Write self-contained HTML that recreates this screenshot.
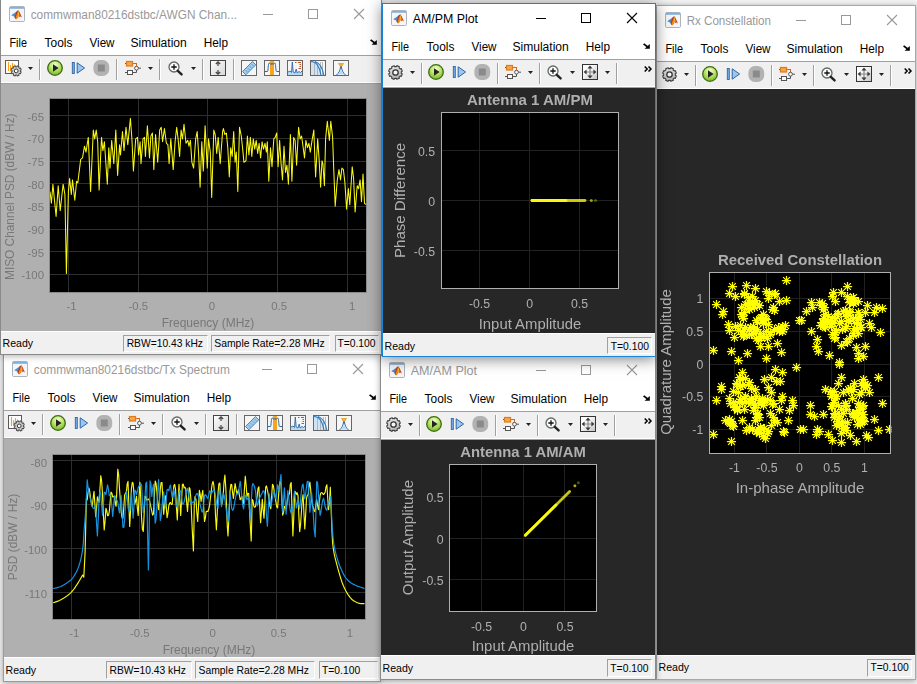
<!DOCTYPE html><html><head><meta charset="utf-8"><title>Scopes</title><style>
*{box-sizing:border-box;margin:0;padding:0}
html,body{width:917px;height:684px;overflow:hidden;background:#f3f3f3;font-family:"Liberation Sans",sans-serif;}
.win{position:absolute;background:#fff;overflow:hidden}
.abs{position:absolute}
.tb{position:absolute;left:0;right:0;background:#f0f0f0;border-top:1px solid #a0a0a0;}
.sep{position:absolute;width:1px;background:#a0a0a0;box-shadow:1px 0 0 #fff}
.st{position:absolute;left:0;right:0;background:#f0f0f0;border-top:1px solid #fff}
.box{position:absolute;border:1px solid;border-color:#a0a0a0 #fff #fff #a0a0a0;}
svg{position:absolute;overflow:visible}
svg text{font-family:"Liberation Sans",sans-serif;white-space:pre}
</style></head><body><div class="abs" style="left:0;top:0;width:917px;height:684px;overflow:hidden"><div class="win" style="left:3px;top:354px;width:378px;height:328px;border:1px solid #9c9c9c;box-shadow:0 1px 6px rgba(0,0,0,0.35)"><div class="abs" style="left:-1px;top:-1px;width:378px;height:328px"><svg style="left:9px;top:7px" width="16" height="16" viewBox="0 0 16 16">
<rect x="0.5" y="0.5" width="15" height="15" rx="1.2" fill="#f6f6f6" stroke="#a4aab2" stroke-width="0.9"/>
<rect x="1" y="1" width="14" height="1.8" fill="#7ab3e6"/>
<path d="M2.2 9.3L7.6 5.6L8.4 7L6.2 11.2L4.6 10.2Z" fill="#4a8fd2"/>
<path d="M9.4 4L7.6 5.6L5.4 11.6L7 13.4L8.4 12L9 8Z" fill="#b8321c"/>
<path d="M9.4 4.2L10.3 8L9.2 11.4L7.2 13.3L6.6 11.4L8.6 6.2Z" fill="#ef8a1e"/>
<path d="M9.4 4.4L9.9 8.6L9 8.8Z" fill="#f8d422"/>
<path d="M9.4 4L10.8 6.6L13 11.6L11.6 10.4L10.2 11.2L10.2 8Z" fill="#cc4420"/>
</svg><div class="abs" style="left:259px;top:15px;width:10px;height:1px;background:#999"></div><div class="abs" style="left:304px;top:10px;width:10px;height:10px;border:1px solid #999"></div><svg style="left:350px;top:10px" width="10" height="10"><path d="M0 0L10 10M10 0L0 10" stroke="#999" stroke-width="1.1" fill="none"/></svg><svg style="left:366px;top:40px" width="7" height="6" viewBox="0 0 7 6"><path d="M0.6 0.9L4.4 3.8" stroke="#000" stroke-width="1.7" fill="none"/><path d="M6.8 1V5.8H1.6Z" fill="#000"/></svg><div class="tb" style="top:56px;height:28px;border-bottom:1px solid #fff"></div><div class="abs" style="left:0;right:0;top:84px;height:1px;background:#a0a0a0"></div><svg style="left:5px;top:61px" width="17" height="17" viewBox="0 0 17 17">
<rect x="0.5" y="0.5" width="13" height="13" fill="#fcfcfc" stroke="#5a5a5a"/>
<path d="M3.5 2V11M5.5 5V11M7.5 3V9M9.5 4.5V8" stroke="#f5a01e" stroke-width="1.1"/>
<g transform="translate(11.2,10.9)"><path d="M5.10 -1.01L5.10 1.01L4.07 1.04L3.62 2.14L4.32 2.89L2.89 4.32L2.14 3.62L1.04 4.07L1.01 5.10L-1.01 5.10L-1.04 4.07L-2.14 3.62L-2.89 4.32L-4.32 2.89L-3.62 2.14L-4.07 1.04L-5.10 1.01L-5.10 -1.01L-4.07 -1.04L-3.62 -2.14L-4.32 -2.89L-2.89 -4.32L-2.14 -3.62L-1.04 -4.07L-1.01 -5.10L1.01 -5.10L1.04 -4.07L2.14 -3.62L2.89 -4.32L4.32 -2.89L3.62 -2.14L4.07 -1.04Z" fill="#c9c9c9" stroke="#4a4a4a" stroke-width="0.9" stroke-linejoin="round" transform="rotate(22.5)"/><circle r="1.9" fill="#fafafa" stroke="#3a3a3a" stroke-width="1"/></g>
</svg><svg style="left:28px;top:68px" width="5" height="3"><path d="M0 0H5L2.5 3Z" fill="#222"/></svg><div class="sep" style="left:39px;top:60px;height:21px"></div><svg style="left:47px;top:61px" width="64" height="16" viewBox="0 0 64 16">
<defs><radialGradient id="g5569" cx="0.5" cy="0.3" r="0.7"><stop offset="0" stop-color="#f6fce0"/><stop offset="0.5" stop-color="#b9e565"/><stop offset="1" stop-color="#74b428"/></radialGradient></defs>
<circle cx="8" cy="8" r="7.3" fill="url(#g5569)" stroke="#3f6b14" stroke-width="1.3"/>
<path d="M6 4.2L11.6 8L6 11.8Z" fill="#222"/>
<rect x="25.3" y="2.5" width="2" height="11" fill="#7db1e3" stroke="#2f66a8" stroke-width="0.9"/>
<path d="M30.2 2.8L37.6 8L30.2 13.2Z" fill="#9cc6ee" stroke="#2f66a8" stroke-width="1"/>
<rect x="46.4" y="0.1" width="15.8" height="15.8" rx="6.5" fill="#b2b2b2"/>
<rect x="50.8" y="4.5" width="7" height="7" fill="#8a8a8a"/>
</svg><div class="sep" style="left:116px;top:60px;height:21px"></div><svg style="left:125px;top:62px" width="16" height="15" viewBox="0 0 16 15">
<path d="M0 2.5H2M8 2.5H11.5V5.5M0 11.5H2.5M8 11.5H11.5V9M13 7.2H16" stroke="#555" stroke-width="1" fill="none"/>
<path d="M8 2.5H11.5V5.5" stroke="#d9651a" stroke-width="1" fill="none"/>
<rect x="1.5" y="0.5" width="6" height="4.5" fill="#f7a64a" stroke="#e07b1c" stroke-width="1.2"/>
<rect x="2.5" y="9.5" width="5" height="4" fill="#fafafa" stroke="#555"/>
<circle cx="11.5" cy="7.2" r="1.9" fill="#fafafa" stroke="#555"/>
</svg><svg style="left:148px;top:68px" width="5" height="3"><path d="M0 0H5L2.5 3Z" fill="#222"/></svg><div class="sep" style="left:159px;top:60px;height:21px"></div><svg style="left:168px;top:62px" width="16" height="15" viewBox="0 0 16 15">
<circle cx="6" cy="6" r="5" fill="#f6fafc" stroke="#666" stroke-width="1.3"/>
<path d="M3.3 6H8.7M6 3.3V8.7" stroke="#111" stroke-width="1.3"/>
<path d="M9.8 9.8L13.6 13.4" stroke="#222" stroke-width="2.4" stroke-linecap="round"/>
</svg><svg style="left:191px;top:68px" width="5" height="3"><path d="M0 0H5L2.5 3Z" fill="#222"/></svg><div class="sep" style="left:202px;top:60px;height:21px"></div><svg style="left:210px;top:61px" width="16" height="16" viewBox="0 0 16 16">
<defs><linearGradient id="as21061" x1="0" y1="0" x2="1" y2="1"><stop offset="0" stop-color="#fff"/><stop offset="1" stop-color="#d6d6d6"/></linearGradient></defs>
<rect x="0.5" y="0.5" width="15" height="15" fill="url(#as21061)" stroke="#444"/>
<path d="M8 2.2V6M5.8 4L8 1.8L10.2 4M8 10V13.8M5.8 12L8 14.2L10.2 12" stroke="#444" stroke-width="1.2" fill="none"/>
</svg><div class="sep" style="left:233px;top:60px;height:21px"></div><svg style="left:241px;top:61px" width="16" height="16" viewBox="0 0 16 16">
<rect x="0.5" y="0.5" width="15" height="15" fill="#f6f6f6" stroke="#666"/>
<path d="M1.5 11.5L11.5 1.5L14.8 4.8L4.8 14.8Z" fill="#9fcdee" stroke="#3d78b4" stroke-width="0.9"/>
<path d="M5 10.5l1 1M7 8.5l1 1M9 6.5l1 1M11 4.5l1 1" stroke="#2c5c94" stroke-width="0.8"/>
</svg><svg style="left:264px;top:61px" width="16" height="16" viewBox="0 0 16 16">
<rect x="0.5" y="0.5" width="15" height="15" fill="#f6f6f6" stroke="#666"/>
<rect x="6" y="1" width="4" height="14" fill="#f7a51c"/>
<path d="M1 11.5H3.5C4.3 11.5 4 3 5.2 3S6.2 4.5 7 4.5S7.6 3 8 3S8.4 4.5 9 4.5S9.8 3 10.8 3S11.7 11.5 12.5 11.5H15" stroke="#2f66a8" stroke-width="1" fill="none"/>
</svg><svg style="left:287px;top:61px" width="16" height="16" viewBox="0 0 16 16">
<rect x="0.5" y="0.5" width="15" height="15" fill="#f6f6f6" stroke="#666"/>
<path d="M1 15V12L3 11L4.5 12.5L5.3 2L6.2 12L8 13L9.2 9L10.2 13L12 11.5L13.5 12.5L15 11V15Z" fill="#b9d9f2"/>
<path d="M1 12L3 11L4.5 12.5L5.3 2L6.2 12L8 13L9.2 9L10.2 13L12 11.5L13.5 12.5L15 11" stroke="#2f66a8" stroke-width="0.9" fill="none"/>
<path d="M8 2.5H9.5M11 2.5H14M12.5 4.5H14M12.5 6.5H14M11.5 8.5H14" stroke="#c8501e" stroke-width="1"/>
</svg><svg style="left:310px;top:61px" width="16" height="16" viewBox="0 0 16 16">
<rect x="0.5" y="0.5" width="15" height="15" fill="#f6f6f6" stroke="#666"/>
<path d="M1 1.5C6 1.5 9.5 6 11 15H1Z" fill="#cfe3f5"/>
<path d="M4.5 2V15M7.5 3V15M10.5 2V15M12.5 2V15" stroke="#aaa" stroke-width="0.8"/>
<path d="M1 1.5C6 1.5 9.5 6 11 15M5 1.5C9.5 3 12.5 8 13.8 15" stroke="#2c7fc8" stroke-width="1.1" fill="none"/>
</svg><svg style="left:333px;top:61px" width="16" height="16" viewBox="0 0 16 16">
<rect x="0.5" y="0.5" width="15" height="15" fill="#f6f6f6" stroke="#666"/>
<path d="M5.5 3.5H10.5L8.6 6.5H7.4Z" fill="#f5b81e" stroke="#d18a10" stroke-width="0.6"/>
<path d="M3.5 15C6 13 7.4 10 7.6 6.5M12.5 15C10 13 8.6 10 8.4 6.5" stroke="#2f66a8" stroke-width="1" fill="none"/>
<path d="M5 14.5C6.8 13 7.7 11 8 8.5C8.3 11 9.2 13 11 14.5Z" fill="#b9d9f2"/>
</svg><div class="st" style="top:303px;height:24px"><div class="box" style="left:103px;top:3px;width:86px;height:18px"></div><div class="box" style="left:192px;top:3px;width:120px;height:18px"></div><div class="box" style="left:316px;top:3px;width:59px;height:18px"></div></div><svg style="left:-3px;top:-354px" width="917" height="684" viewBox="0 0 917 684"><rect x="0" y="439" width="382" height="218" fill="#b0b0b0"/><text x="33.7" y="373.8" font-size="12" fill="#999" textLength="196.2" lengthAdjust="spacingAndGlyphs">commwman80216dstbc/Tx Spectrum</text><text x="12.5" y="401.7" font-size="12" fill="#000" textLength="17.4" lengthAdjust="spacingAndGlyphs">File</text><text x="47.6" y="401.7" font-size="12" fill="#000" textLength="27.8" lengthAdjust="spacingAndGlyphs">Tools</text><text x="92.5" y="401.7" font-size="12" fill="#000" textLength="25" lengthAdjust="spacingAndGlyphs">View</text><text x="133.4" y="401.7" font-size="12" fill="#000" textLength="56.4" lengthAdjust="spacingAndGlyphs">Simulation</text><text x="206.7" y="401.7" font-size="12" fill="#000" textLength="24.3" lengthAdjust="spacingAndGlyphs">Help</text><text x="5.5" y="674.0" font-size="11" fill="#000" textLength="30.6" lengthAdjust="spacingAndGlyphs">Ready</text><text x="109.5" y="674.0" font-size="11" fill="#000" textLength="76.3" lengthAdjust="spacingAndGlyphs">RBW=10.43 kHz</text><text x="198.5" y="674.0" font-size="11" fill="#000" textLength="110.4" lengthAdjust="spacingAndGlyphs">Sample Rate=2.28 MHz</text><text x="322" y="674.0" font-size="11" fill="#000" textLength="38.2" lengthAdjust="spacingAndGlyphs">T=0.100</text></svg></div></div><div class="win" style="left:656px;top:5px;width:260px;height:675px;border:1px solid #a8a8a8;box-shadow:0 1px 6px rgba(0,0,0,0.35)"><div class="abs" style="left:-1px;top:-1px;width:260px;height:675px"><svg style="left:9px;top:7px" width="16" height="16" viewBox="0 0 16 16">
<rect x="0.5" y="0.5" width="15" height="15" rx="1.2" fill="#f6f6f6" stroke="#a4aab2" stroke-width="0.9"/>
<rect x="1" y="1" width="14" height="1.8" fill="#7ab3e6"/>
<path d="M2.2 9.3L7.6 5.6L8.4 7L6.2 11.2L4.6 10.2Z" fill="#4a8fd2"/>
<path d="M9.4 4L7.6 5.6L5.4 11.6L7 13.4L8.4 12L9 8Z" fill="#b8321c"/>
<path d="M9.4 4.2L10.3 8L9.2 11.4L7.2 13.3L6.6 11.4L8.6 6.2Z" fill="#ef8a1e"/>
<path d="M9.4 4.4L9.9 8.6L9 8.8Z" fill="#f8d422"/>
<path d="M9.4 4L10.8 6.6L13 11.6L11.6 10.4L10.2 11.2L10.2 8Z" fill="#cc4420"/>
</svg><div class="abs" style="left:140px;top:15px;width:10px;height:1px;background:#999"></div><div class="abs" style="left:185px;top:10px;width:10px;height:10px;border:1px solid #999"></div><svg style="left:231px;top:10px" width="10" height="10"><path d="M0 0L10 10M10 0L0 10" stroke="#999" stroke-width="1.1" fill="none"/></svg><svg style="left:247px;top:40px" width="7" height="6" viewBox="0 0 7 6"><path d="M0.6 0.9L4.4 3.8" stroke="#000" stroke-width="1.7" fill="none"/><path d="M6.8 1V5.8H1.6Z" fill="#000"/></svg><div class="tb" style="top:56px;height:28px;border-bottom:1px solid #fff"></div><div class="abs" style="left:0;right:0;top:84px;height:1px;background:#a0a0a0"></div><svg style="left:6px;top:61.5px" width="15" height="15" viewBox="-7.5 -7.5 15 15">
<defs><linearGradient id="gg60615" x1="0" y1="0" x2="1" y2="1"><stop offset="0" stop-color="#f2f2f2"/><stop offset="1" stop-color="#a8a8a8"/></linearGradient></defs>
<path d="M6.87 -1.37L6.87 1.37L5.71 1.47L5.08 3.00L5.82 3.89L3.89 5.82L3.00 5.08L1.47 5.71L1.37 6.87L-1.37 6.87L-1.47 5.71L-3.00 5.08L-3.89 5.82L-5.82 3.89L-5.08 3.00L-5.71 1.47L-6.87 1.37L-6.87 -1.37L-5.71 -1.47L-5.08 -3.00L-5.82 -3.89L-3.89 -5.82L-3.00 -5.08L-1.47 -5.71L-1.37 -6.87L1.37 -6.87L1.47 -5.71L3.00 -5.08L3.89 -5.82L5.82 -3.89L5.08 -3.00L5.71 -1.47Z" fill="url(#gg60615)" stroke="#3e3e3e" stroke-width="1.1" stroke-linejoin="round" transform="rotate(22.5)"/>
<circle r="2.7" fill="#f6f6f6" stroke="#333" stroke-width="1.3"/></svg><svg style="left:28px;top:68px" width="5" height="3"><path d="M0 0H5L2.5 3Z" fill="#222"/></svg><div class="sep" style="left:39px;top:60px;height:21px"></div><svg style="left:46px;top:61px" width="64" height="16" viewBox="0 0 64 16">
<defs><radialGradient id="g5469" cx="0.5" cy="0.3" r="0.7"><stop offset="0" stop-color="#f6fce0"/><stop offset="0.5" stop-color="#b9e565"/><stop offset="1" stop-color="#74b428"/></radialGradient></defs>
<circle cx="8" cy="8" r="7.3" fill="url(#g5469)" stroke="#3f6b14" stroke-width="1.3"/>
<path d="M6 4.2L11.6 8L6 11.8Z" fill="#222"/>
<rect x="25.3" y="2.5" width="2" height="11" fill="#7db1e3" stroke="#2f66a8" stroke-width="0.9"/>
<path d="M30.2 2.8L37.6 8L30.2 13.2Z" fill="#9cc6ee" stroke="#2f66a8" stroke-width="1"/>
<rect x="46.4" y="0.1" width="15.8" height="15.8" rx="6.5" fill="#b2b2b2"/>
<rect x="50.8" y="4.5" width="7" height="7" fill="#8a8a8a"/>
</svg><div class="sep" style="left:115px;top:60px;height:21px"></div><svg style="left:123px;top:62px" width="16" height="15" viewBox="0 0 16 15">
<path d="M0 2.5H2M8 2.5H11.5V5.5M0 11.5H2.5M8 11.5H11.5V9M13 7.2H16" stroke="#555" stroke-width="1" fill="none"/>
<path d="M8 2.5H11.5V5.5" stroke="#d9651a" stroke-width="1" fill="none"/>
<rect x="1.5" y="0.5" width="6" height="4.5" fill="#f7a64a" stroke="#e07b1c" stroke-width="1.2"/>
<rect x="2.5" y="9.5" width="5" height="4" fill="#fafafa" stroke="#555"/>
<circle cx="11.5" cy="7.2" r="1.9" fill="#fafafa" stroke="#555"/>
</svg><svg style="left:146px;top:68px" width="5" height="3"><path d="M0 0H5L2.5 3Z" fill="#222"/></svg><div class="sep" style="left:157px;top:60px;height:21px"></div><svg style="left:165px;top:62px" width="16" height="15" viewBox="0 0 16 15">
<circle cx="6" cy="6" r="5" fill="#f6fafc" stroke="#666" stroke-width="1.3"/>
<path d="M3.3 6H8.7M6 3.3V8.7" stroke="#111" stroke-width="1.3"/>
<path d="M9.8 9.8L13.6 13.4" stroke="#222" stroke-width="2.4" stroke-linecap="round"/>
</svg><svg style="left:188px;top:68px" width="5" height="3"><path d="M0 0H5L2.5 3Z" fill="#222"/></svg><svg style="left:199.5px;top:61px" width="16" height="16" viewBox="0 0 16 16">
<defs><linearGradient id="ft1995610" x1="0" y1="0" x2="1" y2="1"><stop offset="0.3" stop-color="#fdfdfd"/><stop offset="1" stop-color="#c4c4c4"/></linearGradient></defs>
<rect x="0.5" y="0.5" width="15" height="15" fill="url(#ft1995610)" stroke="#333"/>
<path d="M8 3.5V12.5M3.5 8H12.5" stroke="#8a8a8a" stroke-width="1.2"/>
<path d="M8 1.6L10.6 4.6H5.4ZM8 14.4L10.6 11.4H5.4ZM1.6 8L4.6 5.4V10.6ZM14.4 8L11.4 5.4V10.6Z" fill="#3a3a3a"/>
</svg><svg style="left:223px;top:68px" width="5" height="3"><path d="M0 0H5L2.5 3Z" fill="#222"/></svg><div class="sep" style="left:234px;top:60px;height:21px"></div><svg style="left:248px;top:63px" width="8" height="6" viewBox="0 0 8 6"><path d="M0.7 0.4L3.2 3L0.7 5.6M4.5 0.4L7 3L4.5 5.6" stroke="#000" stroke-width="1.5" fill="none"/></svg><div class="st" style="top:650px;height:24px"><div class="box" style="left:211px;top:3px;width:45px;height:18px"></div></div><svg style="left:-656px;top:-5px" width="917" height="684" viewBox="0 0 917 684"><rect x="656" y="89" width="262" height="566" fill="#272727"/><text x="686.7" y="24.8" font-size="12" fill="#999" textLength="84.3" lengthAdjust="spacingAndGlyphs">Rx Constellation</text><text x="665.5" y="52.7" font-size="12" fill="#000" textLength="17.4" lengthAdjust="spacingAndGlyphs">File</text><text x="700.6" y="52.7" font-size="12" fill="#000" textLength="27.8" lengthAdjust="spacingAndGlyphs">Tools</text><text x="745.5" y="52.7" font-size="12" fill="#000" textLength="25" lengthAdjust="spacingAndGlyphs">View</text><text x="786.4" y="52.7" font-size="12" fill="#000" textLength="56.4" lengthAdjust="spacingAndGlyphs">Simulation</text><text x="859.7" y="52.7" font-size="12" fill="#000" textLength="24.3" lengthAdjust="spacingAndGlyphs">Help</text><text x="658.5" y="671.4" font-size="11" fill="#000" textLength="30.6" lengthAdjust="spacingAndGlyphs">Ready</text><text x="870.5" y="671.4" font-size="11" fill="#000" textLength="38.2" lengthAdjust="spacingAndGlyphs">T=0.100</text></svg></div></div><div class="win" style="left:380px;top:355px;width:276px;height:325px;border:1px solid #8a8a8a;box-shadow:0 1px 6px rgba(0,0,0,0.35)"><div class="abs" style="left:-1px;top:-1px;width:276px;height:325px"><svg style="left:9px;top:7px" width="16" height="16" viewBox="0 0 16 16">
<rect x="0.5" y="0.5" width="15" height="15" rx="1.2" fill="#f6f6f6" stroke="#a4aab2" stroke-width="0.9"/>
<rect x="1" y="1" width="14" height="1.8" fill="#7ab3e6"/>
<path d="M2.2 9.3L7.6 5.6L8.4 7L6.2 11.2L4.6 10.2Z" fill="#4a8fd2"/>
<path d="M9.4 4L7.6 5.6L5.4 11.6L7 13.4L8.4 12L9 8Z" fill="#b8321c"/>
<path d="M9.4 4.2L10.3 8L9.2 11.4L7.2 13.3L6.6 11.4L8.6 6.2Z" fill="#ef8a1e"/>
<path d="M9.4 4.4L9.9 8.6L9 8.8Z" fill="#f8d422"/>
<path d="M9.4 4L10.8 6.6L13 11.6L11.6 10.4L10.2 11.2L10.2 8Z" fill="#cc4420"/>
</svg><div class="abs" style="left:156px;top:15px;width:10px;height:1px;background:#999"></div><div class="abs" style="left:201px;top:10px;width:10px;height:10px;border:1px solid #999"></div><svg style="left:247px;top:10px" width="10" height="10"><path d="M0 0L10 10M10 0L0 10" stroke="#999" stroke-width="1.1" fill="none"/></svg><svg style="left:263px;top:40px" width="7" height="6" viewBox="0 0 7 6"><path d="M0.6 0.9L4.4 3.8" stroke="#000" stroke-width="1.7" fill="none"/><path d="M6.8 1V5.8H1.6Z" fill="#000"/></svg><div class="tb" style="top:56px;height:28px;border-bottom:1px solid #fff"></div><div class="abs" style="left:0;right:0;top:84px;height:1px;background:#a0a0a0"></div><svg style="left:6px;top:61.5px" width="15" height="15" viewBox="-7.5 -7.5 15 15">
<defs><linearGradient id="gg60615" x1="0" y1="0" x2="1" y2="1"><stop offset="0" stop-color="#f2f2f2"/><stop offset="1" stop-color="#a8a8a8"/></linearGradient></defs>
<path d="M6.87 -1.37L6.87 1.37L5.71 1.47L5.08 3.00L5.82 3.89L3.89 5.82L3.00 5.08L1.47 5.71L1.37 6.87L-1.37 6.87L-1.47 5.71L-3.00 5.08L-3.89 5.82L-5.82 3.89L-5.08 3.00L-5.71 1.47L-6.87 1.37L-6.87 -1.37L-5.71 -1.47L-5.08 -3.00L-5.82 -3.89L-3.89 -5.82L-3.00 -5.08L-1.47 -5.71L-1.37 -6.87L1.37 -6.87L1.47 -5.71L3.00 -5.08L3.89 -5.82L5.82 -3.89L5.08 -3.00L5.71 -1.47Z" fill="url(#gg60615)" stroke="#3e3e3e" stroke-width="1.1" stroke-linejoin="round" transform="rotate(22.5)"/>
<circle r="2.7" fill="#f6f6f6" stroke="#333" stroke-width="1.3"/></svg><svg style="left:28px;top:68px" width="5" height="3"><path d="M0 0H5L2.5 3Z" fill="#222"/></svg><div class="sep" style="left:39px;top:60px;height:21px"></div><svg style="left:46px;top:61px" width="64" height="16" viewBox="0 0 64 16">
<defs><radialGradient id="g5469" cx="0.5" cy="0.3" r="0.7"><stop offset="0" stop-color="#f6fce0"/><stop offset="0.5" stop-color="#b9e565"/><stop offset="1" stop-color="#74b428"/></radialGradient></defs>
<circle cx="8" cy="8" r="7.3" fill="url(#g5469)" stroke="#3f6b14" stroke-width="1.3"/>
<path d="M6 4.2L11.6 8L6 11.8Z" fill="#222"/>
<rect x="25.3" y="2.5" width="2" height="11" fill="#7db1e3" stroke="#2f66a8" stroke-width="0.9"/>
<path d="M30.2 2.8L37.6 8L30.2 13.2Z" fill="#9cc6ee" stroke="#2f66a8" stroke-width="1"/>
<rect x="46.4" y="0.1" width="15.8" height="15.8" rx="6.5" fill="#b2b2b2"/>
<rect x="50.8" y="4.5" width="7" height="7" fill="#8a8a8a"/>
</svg><div class="sep" style="left:115px;top:60px;height:21px"></div><svg style="left:123px;top:62px" width="16" height="15" viewBox="0 0 16 15">
<path d="M0 2.5H2M8 2.5H11.5V5.5M0 11.5H2.5M8 11.5H11.5V9M13 7.2H16" stroke="#555" stroke-width="1" fill="none"/>
<path d="M8 2.5H11.5V5.5" stroke="#d9651a" stroke-width="1" fill="none"/>
<rect x="1.5" y="0.5" width="6" height="4.5" fill="#f7a64a" stroke="#e07b1c" stroke-width="1.2"/>
<rect x="2.5" y="9.5" width="5" height="4" fill="#fafafa" stroke="#555"/>
<circle cx="11.5" cy="7.2" r="1.9" fill="#fafafa" stroke="#555"/>
</svg><svg style="left:146px;top:68px" width="5" height="3"><path d="M0 0H5L2.5 3Z" fill="#222"/></svg><div class="sep" style="left:157px;top:60px;height:21px"></div><svg style="left:165px;top:62px" width="16" height="15" viewBox="0 0 16 15">
<circle cx="6" cy="6" r="5" fill="#f6fafc" stroke="#666" stroke-width="1.3"/>
<path d="M3.3 6H8.7M6 3.3V8.7" stroke="#111" stroke-width="1.3"/>
<path d="M9.8 9.8L13.6 13.4" stroke="#222" stroke-width="2.4" stroke-linecap="round"/>
</svg><svg style="left:188px;top:68px" width="5" height="3"><path d="M0 0H5L2.5 3Z" fill="#222"/></svg><svg style="left:199.5px;top:61px" width="16" height="16" viewBox="0 0 16 16">
<defs><linearGradient id="ft1995610" x1="0" y1="0" x2="1" y2="1"><stop offset="0.3" stop-color="#fdfdfd"/><stop offset="1" stop-color="#c4c4c4"/></linearGradient></defs>
<rect x="0.5" y="0.5" width="15" height="15" fill="url(#ft1995610)" stroke="#333"/>
<path d="M8 3.5V12.5M3.5 8H12.5" stroke="#8a8a8a" stroke-width="1.2"/>
<path d="M8 1.6L10.6 4.6H5.4ZM8 14.4L10.6 11.4H5.4ZM1.6 8L4.6 5.4V10.6ZM14.4 8L11.4 5.4V10.6Z" fill="#3a3a3a"/>
</svg><svg style="left:223px;top:68px" width="5" height="3"><path d="M0 0H5L2.5 3Z" fill="#222"/></svg><div class="sep" style="left:234px;top:60px;height:21px"></div><svg style="left:264px;top:63px" width="8" height="6" viewBox="0 0 8 6"><path d="M0.7 0.4L3.2 3L0.7 5.6M4.5 0.4L7 3L4.5 5.6" stroke="#000" stroke-width="1.5" fill="none"/></svg><div class="st" style="top:300px;height:24px"><div class="box" style="left:227px;top:3px;width:45px;height:18px"></div></div><svg style="left:-380px;top:-355px" width="917" height="684" viewBox="0 0 917 684"><rect x="380" y="440" width="276" height="215" fill="#272727"/><text x="410.7" y="374.8" font-size="12" fill="#999" textLength="66.4" lengthAdjust="spacingAndGlyphs">AM/AM Plot</text><text x="389.5" y="402.7" font-size="12" fill="#000" textLength="17.4" lengthAdjust="spacingAndGlyphs">File</text><text x="424.6" y="402.7" font-size="12" fill="#000" textLength="27.8" lengthAdjust="spacingAndGlyphs">Tools</text><text x="469.5" y="402.7" font-size="12" fill="#000" textLength="25" lengthAdjust="spacingAndGlyphs">View</text><text x="510.4" y="402.7" font-size="12" fill="#000" textLength="56.4" lengthAdjust="spacingAndGlyphs">Simulation</text><text x="583.7" y="402.7" font-size="12" fill="#000" textLength="24.3" lengthAdjust="spacingAndGlyphs">Help</text><text x="382.5" y="672.4" font-size="11" fill="#000" textLength="30.6" lengthAdjust="spacingAndGlyphs">Ready</text><text x="610.3" y="672.4" font-size="11" fill="#000" textLength="38.2" lengthAdjust="spacingAndGlyphs">T=0.100</text></svg></div></div><div class="win" style="left:0px;top:-1px;width:382px;height:356px;border:1px solid #8a8a8a;box-shadow:0 1px 7px rgba(0,0,0,0.32)"><div class="abs" style="left:-1px;top:-1px;width:382px;height:356px"><svg style="left:9px;top:7px" width="16" height="16" viewBox="0 0 16 16">
<rect x="0.5" y="0.5" width="15" height="15" rx="1.2" fill="#f6f6f6" stroke="#a4aab2" stroke-width="0.9"/>
<rect x="1" y="1" width="14" height="1.8" fill="#7ab3e6"/>
<path d="M2.2 9.3L7.6 5.6L8.4 7L6.2 11.2L4.6 10.2Z" fill="#4a8fd2"/>
<path d="M9.4 4L7.6 5.6L5.4 11.6L7 13.4L8.4 12L9 8Z" fill="#b8321c"/>
<path d="M9.4 4.2L10.3 8L9.2 11.4L7.2 13.3L6.6 11.4L8.6 6.2Z" fill="#ef8a1e"/>
<path d="M9.4 4.4L9.9 8.6L9 8.8Z" fill="#f8d422"/>
<path d="M9.4 4L10.8 6.6L13 11.6L11.6 10.4L10.2 11.2L10.2 8Z" fill="#cc4420"/>
</svg><div class="abs" style="left:263px;top:15px;width:10px;height:1px;background:#999"></div><div class="abs" style="left:308px;top:10px;width:10px;height:10px;border:1px solid #999"></div><svg style="left:354px;top:10px" width="10" height="10"><path d="M0 0L10 10M10 0L0 10" stroke="#999" stroke-width="1.1" fill="none"/></svg><svg style="left:370px;top:40px" width="7" height="6" viewBox="0 0 7 6"><path d="M0.6 0.9L4.4 3.8" stroke="#000" stroke-width="1.7" fill="none"/><path d="M6.8 1V5.8H1.6Z" fill="#000"/></svg><div class="tb" style="top:56px;height:28px;border-bottom:1px solid #fff"></div><div class="abs" style="left:0;right:0;top:84px;height:1px;background:#a0a0a0"></div><svg style="left:5px;top:61px" width="17" height="17" viewBox="0 0 17 17">
<rect x="0.5" y="0.5" width="13" height="13" fill="#fcfcfc" stroke="#5a5a5a"/>
<path d="M3.5 2V11M5.5 5V11M7.5 3V9M9.5 4.5V8" stroke="#f5a01e" stroke-width="1.1"/>
<g transform="translate(11.2,10.9)"><path d="M5.10 -1.01L5.10 1.01L4.07 1.04L3.62 2.14L4.32 2.89L2.89 4.32L2.14 3.62L1.04 4.07L1.01 5.10L-1.01 5.10L-1.04 4.07L-2.14 3.62L-2.89 4.32L-4.32 2.89L-3.62 2.14L-4.07 1.04L-5.10 1.01L-5.10 -1.01L-4.07 -1.04L-3.62 -2.14L-4.32 -2.89L-2.89 -4.32L-2.14 -3.62L-1.04 -4.07L-1.01 -5.10L1.01 -5.10L1.04 -4.07L2.14 -3.62L2.89 -4.32L4.32 -2.89L3.62 -2.14L4.07 -1.04Z" fill="#c9c9c9" stroke="#4a4a4a" stroke-width="0.9" stroke-linejoin="round" transform="rotate(22.5)"/><circle r="1.9" fill="#fafafa" stroke="#3a3a3a" stroke-width="1"/></g>
</svg><svg style="left:28px;top:68px" width="5" height="3"><path d="M0 0H5L2.5 3Z" fill="#222"/></svg><div class="sep" style="left:39px;top:60px;height:21px"></div><svg style="left:47px;top:61px" width="64" height="16" viewBox="0 0 64 16">
<defs><radialGradient id="g5569" cx="0.5" cy="0.3" r="0.7"><stop offset="0" stop-color="#f6fce0"/><stop offset="0.5" stop-color="#b9e565"/><stop offset="1" stop-color="#74b428"/></radialGradient></defs>
<circle cx="8" cy="8" r="7.3" fill="url(#g5569)" stroke="#3f6b14" stroke-width="1.3"/>
<path d="M6 4.2L11.6 8L6 11.8Z" fill="#222"/>
<rect x="25.3" y="2.5" width="2" height="11" fill="#7db1e3" stroke="#2f66a8" stroke-width="0.9"/>
<path d="M30.2 2.8L37.6 8L30.2 13.2Z" fill="#9cc6ee" stroke="#2f66a8" stroke-width="1"/>
<rect x="46.4" y="0.1" width="15.8" height="15.8" rx="6.5" fill="#b2b2b2"/>
<rect x="50.8" y="4.5" width="7" height="7" fill="#8a8a8a"/>
</svg><div class="sep" style="left:116px;top:60px;height:21px"></div><svg style="left:125px;top:62px" width="16" height="15" viewBox="0 0 16 15">
<path d="M0 2.5H2M8 2.5H11.5V5.5M0 11.5H2.5M8 11.5H11.5V9M13 7.2H16" stroke="#555" stroke-width="1" fill="none"/>
<path d="M8 2.5H11.5V5.5" stroke="#d9651a" stroke-width="1" fill="none"/>
<rect x="1.5" y="0.5" width="6" height="4.5" fill="#f7a64a" stroke="#e07b1c" stroke-width="1.2"/>
<rect x="2.5" y="9.5" width="5" height="4" fill="#fafafa" stroke="#555"/>
<circle cx="11.5" cy="7.2" r="1.9" fill="#fafafa" stroke="#555"/>
</svg><svg style="left:148px;top:68px" width="5" height="3"><path d="M0 0H5L2.5 3Z" fill="#222"/></svg><div class="sep" style="left:159px;top:60px;height:21px"></div><svg style="left:168px;top:62px" width="16" height="15" viewBox="0 0 16 15">
<circle cx="6" cy="6" r="5" fill="#f6fafc" stroke="#666" stroke-width="1.3"/>
<path d="M3.3 6H8.7M6 3.3V8.7" stroke="#111" stroke-width="1.3"/>
<path d="M9.8 9.8L13.6 13.4" stroke="#222" stroke-width="2.4" stroke-linecap="round"/>
</svg><svg style="left:191px;top:68px" width="5" height="3"><path d="M0 0H5L2.5 3Z" fill="#222"/></svg><div class="sep" style="left:202px;top:60px;height:21px"></div><svg style="left:210px;top:61px" width="16" height="16" viewBox="0 0 16 16">
<defs><linearGradient id="as21061" x1="0" y1="0" x2="1" y2="1"><stop offset="0" stop-color="#fff"/><stop offset="1" stop-color="#d6d6d6"/></linearGradient></defs>
<rect x="0.5" y="0.5" width="15" height="15" fill="url(#as21061)" stroke="#444"/>
<path d="M8 2.2V6M5.8 4L8 1.8L10.2 4M8 10V13.8M5.8 12L8 14.2L10.2 12" stroke="#444" stroke-width="1.2" fill="none"/>
</svg><div class="sep" style="left:233px;top:60px;height:21px"></div><svg style="left:241px;top:61px" width="16" height="16" viewBox="0 0 16 16">
<rect x="0.5" y="0.5" width="15" height="15" fill="#f6f6f6" stroke="#666"/>
<path d="M1.5 11.5L11.5 1.5L14.8 4.8L4.8 14.8Z" fill="#9fcdee" stroke="#3d78b4" stroke-width="0.9"/>
<path d="M5 10.5l1 1M7 8.5l1 1M9 6.5l1 1M11 4.5l1 1" stroke="#2c5c94" stroke-width="0.8"/>
</svg><svg style="left:264px;top:61px" width="16" height="16" viewBox="0 0 16 16">
<rect x="0.5" y="0.5" width="15" height="15" fill="#f6f6f6" stroke="#666"/>
<rect x="6" y="1" width="4" height="14" fill="#f7a51c"/>
<path d="M1 11.5H3.5C4.3 11.5 4 3 5.2 3S6.2 4.5 7 4.5S7.6 3 8 3S8.4 4.5 9 4.5S9.8 3 10.8 3S11.7 11.5 12.5 11.5H15" stroke="#2f66a8" stroke-width="1" fill="none"/>
</svg><svg style="left:287px;top:61px" width="16" height="16" viewBox="0 0 16 16">
<rect x="0.5" y="0.5" width="15" height="15" fill="#f6f6f6" stroke="#666"/>
<path d="M1 15V12L3 11L4.5 12.5L5.3 2L6.2 12L8 13L9.2 9L10.2 13L12 11.5L13.5 12.5L15 11V15Z" fill="#b9d9f2"/>
<path d="M1 12L3 11L4.5 12.5L5.3 2L6.2 12L8 13L9.2 9L10.2 13L12 11.5L13.5 12.5L15 11" stroke="#2f66a8" stroke-width="0.9" fill="none"/>
<path d="M8 2.5H9.5M11 2.5H14M12.5 4.5H14M12.5 6.5H14M11.5 8.5H14" stroke="#c8501e" stroke-width="1"/>
</svg><svg style="left:310px;top:61px" width="16" height="16" viewBox="0 0 16 16">
<rect x="0.5" y="0.5" width="15" height="15" fill="#f6f6f6" stroke="#666"/>
<path d="M1 1.5C6 1.5 9.5 6 11 15H1Z" fill="#cfe3f5"/>
<path d="M4.5 2V15M7.5 3V15M10.5 2V15M12.5 2V15" stroke="#aaa" stroke-width="0.8"/>
<path d="M1 1.5C6 1.5 9.5 6 11 15M5 1.5C9.5 3 12.5 8 13.8 15" stroke="#2c7fc8" stroke-width="1.1" fill="none"/>
</svg><svg style="left:333px;top:61px" width="16" height="16" viewBox="0 0 16 16">
<rect x="0.5" y="0.5" width="15" height="15" fill="#f6f6f6" stroke="#666"/>
<path d="M5.5 3.5H10.5L8.6 6.5H7.4Z" fill="#f5b81e" stroke="#d18a10" stroke-width="0.6"/>
<path d="M3.5 15C6 13 7.4 10 7.6 6.5M12.5 15C10 13 8.6 10 8.4 6.5" stroke="#2f66a8" stroke-width="1" fill="none"/>
<path d="M5 14.5C6.8 13 7.7 11 8 8.5C8.3 11 9.2 13 11 14.5Z" fill="#b9d9f2"/>
</svg><div class="st" style="top:332px;height:23px"><div class="box" style="left:123px;top:3px;width:85px;height:17px"></div><div class="box" style="left:211px;top:3px;width:119px;height:17px"></div><div class="box" style="left:335px;top:3px;width:44px;height:17px"></div></div><svg style="left:0px;top:1px" width="917" height="684" viewBox="0 0 917 684"><rect x="0" y="84" width="382" height="247" fill="#b0b0b0"/><text x="30.7" y="18.8" font-size="12" fill="#999" textLength="206.3" lengthAdjust="spacingAndGlyphs">commwman80216dstbc/AWGN Chan...</text><text x="9.5" y="46.7" font-size="12" fill="#000" textLength="17.4" lengthAdjust="spacingAndGlyphs">File</text><text x="44.6" y="46.7" font-size="12" fill="#000" textLength="27.8" lengthAdjust="spacingAndGlyphs">Tools</text><text x="89.5" y="46.7" font-size="12" fill="#000" textLength="25" lengthAdjust="spacingAndGlyphs">View</text><text x="130.4" y="46.7" font-size="12" fill="#000" textLength="56.4" lengthAdjust="spacingAndGlyphs">Simulation</text><text x="203.7" y="46.7" font-size="12" fill="#000" textLength="24.3" lengthAdjust="spacingAndGlyphs">Help</text><text x="2.5" y="346.9" font-size="11" fill="#000" textLength="30.6" lengthAdjust="spacingAndGlyphs">Ready</text><text x="126.7" y="346.9" font-size="11" fill="#000" textLength="76.3" lengthAdjust="spacingAndGlyphs">RBW=10.43 kHz</text><text x="214.3" y="346.9" font-size="11" fill="#000" textLength="110.4" lengthAdjust="spacingAndGlyphs">Sample Rate=2.28 MHz</text><text x="337.4" y="346.9" font-size="11" fill="#000" textLength="38.2" lengthAdjust="spacingAndGlyphs">T=0.100</text></svg></div></div><div class="win" style="left:382px;top:3px;width:274px;height:354px;border:1px solid #1883d7;box-shadow:0 2px 14px rgba(0,0,0,0.5)"><div class="abs" style="left:-1px;top:-1px;width:274px;height:354px"><svg style="left:9px;top:7px" width="16" height="16" viewBox="0 0 16 16">
<rect x="0.5" y="0.5" width="15" height="15" rx="1.2" fill="#f6f6f6" stroke="#a4aab2" stroke-width="0.9"/>
<rect x="1" y="1" width="14" height="1.8" fill="#7ab3e6"/>
<path d="M2.2 9.3L7.6 5.6L8.4 7L6.2 11.2L4.6 10.2Z" fill="#4a8fd2"/>
<path d="M9.4 4L7.6 5.6L5.4 11.6L7 13.4L8.4 12L9 8Z" fill="#b8321c"/>
<path d="M9.4 4.2L10.3 8L9.2 11.4L7.2 13.3L6.6 11.4L8.6 6.2Z" fill="#ef8a1e"/>
<path d="M9.4 4.4L9.9 8.6L9 8.8Z" fill="#f8d422"/>
<path d="M9.4 4L10.8 6.6L13 11.6L11.6 10.4L10.2 11.2L10.2 8Z" fill="#cc4420"/>
</svg><div class="abs" style="left:154px;top:15px;width:10px;height:1px;background:#000"></div><div class="abs" style="left:199px;top:10px;width:10px;height:10px;border:1px solid #000"></div><svg style="left:245px;top:10px" width="10" height="10"><path d="M0 0L10 10M10 0L0 10" stroke="#000" stroke-width="1.1" fill="none"/></svg><svg style="left:261px;top:40px" width="7" height="6" viewBox="0 0 7 6"><path d="M0.6 0.9L4.4 3.8" stroke="#000" stroke-width="1.7" fill="none"/><path d="M6.8 1V5.8H1.6Z" fill="#000"/></svg><div class="tb" style="top:56px;height:28px;border-bottom:1px solid #fff"></div><div class="abs" style="left:0;right:0;top:84px;height:1px;background:#a0a0a0"></div><svg style="left:6px;top:61.5px" width="15" height="15" viewBox="-7.5 -7.5 15 15">
<defs><linearGradient id="gg60615" x1="0" y1="0" x2="1" y2="1"><stop offset="0" stop-color="#f2f2f2"/><stop offset="1" stop-color="#a8a8a8"/></linearGradient></defs>
<path d="M6.87 -1.37L6.87 1.37L5.71 1.47L5.08 3.00L5.82 3.89L3.89 5.82L3.00 5.08L1.47 5.71L1.37 6.87L-1.37 6.87L-1.47 5.71L-3.00 5.08L-3.89 5.82L-5.82 3.89L-5.08 3.00L-5.71 1.47L-6.87 1.37L-6.87 -1.37L-5.71 -1.47L-5.08 -3.00L-5.82 -3.89L-3.89 -5.82L-3.00 -5.08L-1.47 -5.71L-1.37 -6.87L1.37 -6.87L1.47 -5.71L3.00 -5.08L3.89 -5.82L5.82 -3.89L5.08 -3.00L5.71 -1.47Z" fill="url(#gg60615)" stroke="#3e3e3e" stroke-width="1.1" stroke-linejoin="round" transform="rotate(22.5)"/>
<circle r="2.7" fill="#f6f6f6" stroke="#333" stroke-width="1.3"/></svg><svg style="left:28px;top:68px" width="5" height="3"><path d="M0 0H5L2.5 3Z" fill="#222"/></svg><div class="sep" style="left:39px;top:60px;height:21px"></div><svg style="left:46px;top:61px" width="64" height="16" viewBox="0 0 64 16">
<defs><radialGradient id="g5469" cx="0.5" cy="0.3" r="0.7"><stop offset="0" stop-color="#f6fce0"/><stop offset="0.5" stop-color="#b9e565"/><stop offset="1" stop-color="#74b428"/></radialGradient></defs>
<circle cx="8" cy="8" r="7.3" fill="url(#g5469)" stroke="#3f6b14" stroke-width="1.3"/>
<path d="M6 4.2L11.6 8L6 11.8Z" fill="#222"/>
<rect x="25.3" y="2.5" width="2" height="11" fill="#7db1e3" stroke="#2f66a8" stroke-width="0.9"/>
<path d="M30.2 2.8L37.6 8L30.2 13.2Z" fill="#9cc6ee" stroke="#2f66a8" stroke-width="1"/>
<rect x="46.4" y="0.1" width="15.8" height="15.8" rx="6.5" fill="#b2b2b2"/>
<rect x="50.8" y="4.5" width="7" height="7" fill="#8a8a8a"/>
</svg><div class="sep" style="left:115px;top:60px;height:21px"></div><svg style="left:123px;top:62px" width="16" height="15" viewBox="0 0 16 15">
<path d="M0 2.5H2M8 2.5H11.5V5.5M0 11.5H2.5M8 11.5H11.5V9M13 7.2H16" stroke="#555" stroke-width="1" fill="none"/>
<path d="M8 2.5H11.5V5.5" stroke="#d9651a" stroke-width="1" fill="none"/>
<rect x="1.5" y="0.5" width="6" height="4.5" fill="#f7a64a" stroke="#e07b1c" stroke-width="1.2"/>
<rect x="2.5" y="9.5" width="5" height="4" fill="#fafafa" stroke="#555"/>
<circle cx="11.5" cy="7.2" r="1.9" fill="#fafafa" stroke="#555"/>
</svg><svg style="left:146px;top:68px" width="5" height="3"><path d="M0 0H5L2.5 3Z" fill="#222"/></svg><div class="sep" style="left:157px;top:60px;height:21px"></div><svg style="left:165px;top:62px" width="16" height="15" viewBox="0 0 16 15">
<circle cx="6" cy="6" r="5" fill="#f6fafc" stroke="#666" stroke-width="1.3"/>
<path d="M3.3 6H8.7M6 3.3V8.7" stroke="#111" stroke-width="1.3"/>
<path d="M9.8 9.8L13.6 13.4" stroke="#222" stroke-width="2.4" stroke-linecap="round"/>
</svg><svg style="left:188px;top:68px" width="5" height="3"><path d="M0 0H5L2.5 3Z" fill="#222"/></svg><svg style="left:199.5px;top:61px" width="16" height="16" viewBox="0 0 16 16">
<defs><linearGradient id="ft1995610" x1="0" y1="0" x2="1" y2="1"><stop offset="0.3" stop-color="#fdfdfd"/><stop offset="1" stop-color="#c4c4c4"/></linearGradient></defs>
<rect x="0.5" y="0.5" width="15" height="15" fill="url(#ft1995610)" stroke="#333"/>
<path d="M8 3.5V12.5M3.5 8H12.5" stroke="#8a8a8a" stroke-width="1.2"/>
<path d="M8 1.6L10.6 4.6H5.4ZM8 14.4L10.6 11.4H5.4ZM1.6 8L4.6 5.4V10.6ZM14.4 8L11.4 5.4V10.6Z" fill="#3a3a3a"/>
</svg><svg style="left:223px;top:68px" width="5" height="3"><path d="M0 0H5L2.5 3Z" fill="#222"/></svg><div class="sep" style="left:234px;top:60px;height:21px"></div><svg style="left:262px;top:63px" width="8" height="6" viewBox="0 0 8 6"><path d="M0.7 0.4L3.2 3L0.7 5.6M4.5 0.4L7 3L4.5 5.6" stroke="#000" stroke-width="1.5" fill="none"/></svg><div class="st" style="top:330px;height:23px"><div class="box" style="left:225px;top:3px;width:45px;height:17px"></div></div><svg style="left:-382px;top:-3px" width="917" height="684" viewBox="0 0 917 684"><rect x="382" y="88" width="275" height="245" fill="#272727"/><text x="412.7" y="22.8" font-size="12" fill="#000" textLength="65.3" lengthAdjust="spacingAndGlyphs">AM/PM Plot</text><text x="391.5" y="50.7" font-size="12" fill="#000" textLength="17.4" lengthAdjust="spacingAndGlyphs">File</text><text x="426.6" y="50.7" font-size="12" fill="#000" textLength="27.8" lengthAdjust="spacingAndGlyphs">Tools</text><text x="471.5" y="50.7" font-size="12" fill="#000" textLength="25" lengthAdjust="spacingAndGlyphs">View</text><text x="512.4" y="50.7" font-size="12" fill="#000" textLength="56.4" lengthAdjust="spacingAndGlyphs">Simulation</text><text x="585.7" y="50.7" font-size="12" fill="#000" textLength="24.3" lengthAdjust="spacingAndGlyphs">Help</text><text x="384.5" y="349.7" font-size="11" fill="#000" textLength="30.6" lengthAdjust="spacingAndGlyphs">Ready</text><text x="610.7" y="349.7" font-size="11" fill="#000" textLength="38.2" lengthAdjust="spacingAndGlyphs">T=0.100</text></svg></div></div><svg style="left:0;top:0;will-change:transform" width="917" height="684" viewBox="0 0 917 684"><rect x="50" y="99" width="316" height="193" fill="#000"/><rect x="68" y="99" width="1" height="193" fill="#2e2e2e"/><rect x="138" y="99" width="1" height="193" fill="#2e2e2e"/><rect x="207" y="99" width="1" height="193" fill="#2e2e2e"/><rect x="277" y="99" width="1" height="193" fill="#2e2e2e"/><rect x="347" y="99" width="1" height="193" fill="#2e2e2e"/><rect x="50" y="115" width="316" height="1" fill="#2e2e2e"/><rect x="50" y="138" width="316" height="1" fill="#2e2e2e"/><rect x="50" y="161" width="316" height="1" fill="#2e2e2e"/><rect x="50" y="183" width="316" height="1" fill="#2e2e2e"/><rect x="50" y="206" width="316" height="1" fill="#2e2e2e"/><rect x="50" y="229" width="316" height="1" fill="#2e2e2e"/><rect x="50" y="251" width="316" height="1" fill="#2e2e2e"/><rect x="50" y="274" width="316" height="1" fill="#2e2e2e"/><clipPath id="c1"><rect x="50" y="99" width="317.5" height="193"/></clipPath><g clip-path="url(#c1)"><path d="M50.0 191.6L51.4 203.3L52.9 184.2L56.1 216.4L58.2 185.7L60.2 210.6L63.1 184.2L64.9 194.5L66.4 273.5L68.4 191.6L69.6 178.4L71.3 194.5L72.5 179.9L74.8 200.3L76.6 181.3L77.8 182.8L80.7 159.4L82.5 157.9L84.5 146.2L86.0 152.1L88.3 137.4L90.6 191.6L93.3 130.1L94.7 138.9L96.2 130.1L97.7 141.8L99.1 190.1L101.5 137.4L102.9 150.6L104.4 141.8L107.3 184.2L108.8 147.7L110.0 168.1L111.7 140.4L113.8 163.8L115.8 130.1L117.6 175.5L119.6 144.7L120.5 155.0L122.5 131.6L124.0 150.6L126.0 127.2L127.8 144.7L130.4 118.4L131.9 138.9L133.4 171.1L135.7 138.9L137.5 137.4L138.6 155.0L140.1 141.8L141.0 163.8L143.0 138.9L144.5 137.4L145.4 156.4L147.4 125.7L149.5 157.9L150.9 136.0L152.4 133.0L153.8 169.6L155.6 134.5L157.7 162.3L159.7 130.1L161.2 127.2L162.6 141.8L164.4 128.6L166.4 143.3L167.9 144.7L169.1 163.8L170.8 138.9L173.2 169.6L175.2 140.4L176.7 127.2L178.1 138.9L179.6 156.4L181.1 130.1L182.5 138.9L184.0 124.3L186.0 143.3L187.8 140.4L189.0 146.2L190.4 140.4L191.9 162.3L193.6 168.1L195.7 138.9L197.2 131.6L198.6 153.5L200.1 187.2L201.8 141.8L203.3 171.1L205.1 125.7L207.3 168.1L208.5 138.9L210.3 152.1L211.7 197.4L213.8 130.1L215.2 134.5L216.7 153.5L218.2 137.4L220.2 163.8L222.6 131.6L223.4 128.6L224.9 134.5L226.4 133.0L227.8 147.7L229.3 176.9L230.7 147.7L232.2 156.4L233.7 131.6L235.1 162.3L236.3 152.1L237.8 191.6L239.5 127.2L241.3 136.0L243.0 152.1L243.9 162.3L246.0 160.8L247.4 136.0L248.9 155.0L250.4 137.4L251.8 156.4L253.3 138.9L254.7 149.1L256.2 140.4L257.7 153.5L259.1 143.3L260.6 157.9L262.1 141.8L263.5 149.1L265.0 143.3L266.4 152.1L267.3 141.8L268.8 181.3L270.5 147.7L272.0 166.7L273.8 138.9L275.2 137.4L276.7 133.0L278.1 166.7L279.6 140.4L281.1 163.8L282.5 179.9L284.0 146.2L285.5 172.5L286.9 165.2L288.4 184.2L290.4 134.5L291.9 181.3L293.7 137.4L295.1 140.4L296.6 165.2L298.6 127.2L300.1 138.9L301.6 136.0L303.0 146.2L304.5 157.9L305.9 140.4L307.4 147.7L308.9 143.3L310.3 152.1L311.8 141.8L313.8 130.1L315.6 176.9L317.7 138.9L319.1 159.4L320.6 187.2L322.0 160.8L322.9 163.8L324.4 185.7L325.6 138.9L327.3 121.3L329.4 140.4L330.8 121.3L332.6 137.4L333.7 168.1L335.2 206.2L337.3 179.9L339.0 169.6L340.5 179.9L341.9 168.1L343.4 169.6L344.9 182.8L346.6 209.1L348.4 188.6L349.8 204.7L352.2 166.7L353.6 178.4L355.1 212.0L357.2 185.7L358.6 188.6L360.1 179.9L361.5 201.8L363.0 174.0L364.5 203.3L366.2 204.7" fill="none" stroke="#f8f810" stroke-width="1.05" stroke-linejoin="round" /><path d="M366.7 218V233" stroke="#f8f810" stroke-width="1"/></g><rect x="49.5" y="98.5" width="317" height="194" fill="none" stroke="#8a8a8a" stroke-width="1"/><text x="71.6" y="309.7" font-size="11.4" fill="#787878" text-anchor="middle">-1</text><text x="138.4" y="309.7" font-size="11.4" fill="#787878" text-anchor="middle">-0.5</text><text x="212.0" y="309.7" font-size="11.4" fill="#787878" text-anchor="middle">0</text><text x="279.2" y="309.7" font-size="11.4" fill="#787878" text-anchor="middle">0.5</text><text x="352.1" y="309.7" font-size="11.4" fill="#787878" text-anchor="middle">1</text><text x="44" y="120.6" font-size="11.4" fill="#787878" text-anchor="end">-65</text><text x="44" y="143.3" font-size="11.4" fill="#787878" text-anchor="end">-70</text><text x="44" y="165.9" font-size="11.4" fill="#787878" text-anchor="end">-75</text><text x="44" y="188.6" font-size="11.4" fill="#787878" text-anchor="end">-80</text><text x="44" y="211.3" font-size="11.4" fill="#787878" text-anchor="end">-85</text><text x="44" y="234.0" font-size="11.4" fill="#787878" text-anchor="end">-90</text><text x="44" y="256.6" font-size="11.4" fill="#787878" text-anchor="end">-95</text><text x="44" y="279.3" font-size="11.4" fill="#787878" text-anchor="end">-100</text><text x="208.0" y="327.3" font-size="12" fill="#787878" text-anchor="middle">Frequency (MHz)</text><text transform="translate(13.9,196.7) rotate(-90)" font-size="12" fill="#787878" text-anchor="middle" textLength="166.5" lengthAdjust="spacingAndGlyphs">MISO Channel PSD (dBW / Hz)</text><rect x="53" y="455" width="312" height="164" fill="#000"/><rect x="71" y="455" width="1" height="164" fill="#2e2e2e"/><rect x="139" y="455" width="1" height="164" fill="#2e2e2e"/><rect x="208" y="455" width="1" height="164" fill="#2e2e2e"/><rect x="276" y="455" width="1" height="164" fill="#2e2e2e"/><rect x="345" y="455" width="1" height="164" fill="#2e2e2e"/><rect x="53" y="460" width="312" height="1" fill="#2e2e2e"/><rect x="53" y="504" width="312" height="1" fill="#2e2e2e"/><rect x="53" y="548" width="312" height="1" fill="#2e2e2e"/><rect x="53" y="592" width="312" height="1" fill="#2e2e2e"/><clipPath id="c2"><rect x="53" y="455" width="313.5" height="164"/></clipPath><g clip-path="url(#c2)"><path d="M53.1 602.8L53.9 602.5L55.1 602.1L56.5 601.6L57.9 601.1L59.4 600.5L60.8 599.8L62.1 599.1L63.5 598.3L64.8 597.4L66.1 596.5L67.4 595.6L68.5 594.7L69.5 593.9L70.4 593.1L71.2 592.3L72.0 591.4L72.8 590.5L73.6 589.5L74.5 588.4L75.3 587.1L76.2 585.7L77.1 584.4L77.9 583.1L78.7 581.8L79.5 580.5L80.2 579.2L81.0 577.9L81.6 576.7L82.2 575.7L82.6 575.0L83.8 577.2L85.1 552.4L86.4 498.6L87.2 500.0L87.9 493.4L88.9 488.0L89.8 491.9L90.6 498.3L91.5 504.0L92.3 506.4L93.2 497.8L94.0 491.3L94.9 504.2L95.7 516.6L96.6 508.0L97.4 496.9L98.3 500.0L99.1 502.2L100.0 488.1L100.8 475.7L101.7 481.5L102.5 494.9L103.4 514.9L104.2 529.9L105.1 520.8L105.9 508.3L106.8 510.9L107.6 515.8L108.5 515.3L109.3 511.5L110.2 501.2L111.0 492.1L111.9 493.3L112.7 496.9L113.6 496.5L114.4 496.7L115.3 503.7L116.1 506.2L117.0 487.0L117.8 469.2L118.7 475.2L119.5 488.7L120.4 501.1L121.2 511.8L122.1 517.9L122.9 518.2L123.8 507.3L124.6 495.2L125.5 493.2L126.3 492.5L127.2 483.9L128.0 481.3L128.9 505.5L129.7 526.4L130.6 510.8L131.4 488.8L132.3 482.3L133.1 483.2L134.0 493.9L134.8 504.2L135.7 500.4L136.5 496.4L137.3 507.5L138.2 515.5L139.0 497.8L139.9 482.2L140.7 497.4L141.6 518.4L142.4 529.3L143.3 531.4L144.1 514.6L145.0 496.6L145.8 496.3L146.7 500.1L147.5 499.5L148.4 499.0L149.2 500.3L150.1 502.9L150.9 507.1L151.8 511.1L152.6 515.1L153.5 513.9L154.3 497.0L155.2 481.0L156.0 483.1L156.9 491.6L157.7 502.6L158.6 509.7L159.4 501.0L160.3 489.2L161.1 482.6L162.0 482.6L162.8 499.2L163.7 514.3L164.5 505.7L165.4 495.9L166.2 506.4L167.1 517.7L167.9 513.3L168.8 505.7L169.6 503.3L170.5 502.5L171.3 504.4L172.2 504.2L173.0 494.6L173.9 485.3L174.7 484.4L175.6 489.7L176.4 507.3L177.3 519.9L178.1 502.1L179.0 484.4L179.8 499.7L180.7 515.5L181.5 501.5L182.4 484.2L183.2 484.1L184.1 488.0L184.9 487.2L185.8 488.7L186.6 501.6L187.5 511.4L188.3 500.1L189.2 487.5L190.0 488.7L190.9 499.3L192.2 529.0L193.4 551.0L193.9 529.8L194.3 501.9L195.1 496.3L196.0 499.6L196.8 512.3L197.7 521.5L198.5 506.6L199.4 490.4L200.2 494.7L201.1 501.5L201.9 494.8L202.8 490.4L203.6 505.9L204.5 521.5L205.3 518.4L206.2 511.5L207.0 511.2L207.9 511.5L208.7 509.3L209.6 505.4L210.4 498.2L211.3 490.7L212.1 484.4L213.0 481.4L213.8 485.2L214.7 494.6L215.5 515.4L216.4 529.8L217.2 513.8L218.1 492.1L218.9 483.9L219.8 483.0L220.6 493.9L221.5 504.7L222.3 502.6L223.2 495.2L224.0 482.5L224.9 475.0L225.8 488.1L226.6 507.3L227.3 526.4L228.0 536.0L229.0 515.9L230.0 491.4L230.9 484.3L231.7 484.6L232.5 492.0L233.4 498.4L234.2 491.1L235.1 483.5L235.9 488.2L236.8 494.2L237.6 492.1L238.5 489.8L239.3 494.6L240.2 499.6L241.0 498.2L241.9 496.4L242.7 501.6L243.6 503.8L244.4 489.2L245.3 476.2L246.1 484.9L247.0 496.6L247.8 493.4L248.7 493.6L250.0 519.7L251.2 541.0L251.7 522.8L252.1 499.5L252.9 500.1L253.8 506.0L254.6 507.3L255.5 506.5L256.3 501.8L257.2 495.9L258.0 488.4L258.9 486.8L259.7 505.6L260.6 522.6L261.4 512.0L262.3 499.3L263.1 509.3L264.0 518.2L264.8 503.6L265.7 487.0L266.5 485.9L267.4 490.0L268.2 494.2L269.1 499.3L269.9 506.1L270.8 508.8L271.6 496.8L272.5 484.4L273.3 485.5L274.2 491.1L275.0 496.5L275.9 501.9L276.7 506.9L277.6 507.9L278.4 497.4L279.3 485.9L280.1 481.6L281.0 483.9L281.8 499.9L282.7 515.1L283.5 512.6L284.4 506.4L285.2 507.8L286.1 509.0L286.9 503.7L287.8 497.7L288.6 495.6L289.5 493.5L290.3 484.5L291.2 482.6L292.0 511.2L292.9 536.0L293.7 518.4L294.6 494.2L295.4 491.7L296.3 494.4L297.1 492.7L298.0 495.5L298.8 514.8L299.7 531.6L300.5 525.1L301.4 512.0L302.2 500.0L303.1 494.7L303.9 512.6L304.8 528.9L305.6 516.0L306.5 498.4L307.3 495.4L308.2 494.6L309.0 486.9L309.9 482.0L310.7 490.0L311.6 500.5L312.4 505.0L313.3 507.7L314.1 510.8L315.0 511.6L315.8 505.3L316.7 499.7L317.5 504.8L318.4 509.6L319.2 503.4L320.1 495.5L320.9 493.0L321.8 492.5L322.6 493.5L323.5 494.5L324.3 493.8L325.2 491.9L326.0 486.7L326.9 484.8L327.7 498.2L328.6 509.6L329.6 499.9L330.3 487.2L330.6 496.0L331.8 526.8L331.9 529.1L332.0 532.2L332.2 535.9L332.4 539.9L332.7 543.8L333.1 547.3L333.6 550.4L334.1 553.4L334.7 556.2L335.4 559.1L336.2 562.1L337.0 565.2L337.9 568.6L338.9 572.1L340.0 575.8L341.1 579.3L342.2 582.7L343.4 585.7L344.6 588.4L345.8 590.8L347.1 593.1L348.4 595.1L349.7 596.9L351.0 598.5L352.3 599.8L353.6 600.8L355.0 601.6L356.3 602.2L357.5 602.7L358.7 603.1L359.8 603.4L361.0 603.6L362.1 603.6L363.1 603.6L363.9 603.6L364.5 603.6" fill="none" stroke="#f8f810" stroke-width="1.15" stroke-linejoin="round" /><path d="M53.1 588.5L53.9 588.3L55.1 588.1L56.5 587.8L57.9 587.4L59.4 587.0L60.8 586.5L62.1 585.9L63.5 585.1L64.8 584.3L66.1 583.5L67.4 582.6L68.5 581.8L69.5 581.0L70.4 580.3L71.2 579.6L72.0 578.8L72.8 577.8L73.6 576.7L74.5 575.4L75.3 573.9L76.2 572.3L77.1 570.6L77.9 568.6L78.7 566.5L79.4 564.2L80.2 561.6L80.9 559.0L81.5 556.1L82.1 553.0L82.6 549.8L83.0 546.3L83.4 542.4L83.6 538.4L83.9 534.3L84.1 530.4L84.4 526.8L84.7 523.3L85.0 519.8L85.3 516.4L85.5 513.4L85.7 510.8L85.9 508.9L87.2 479.9L87.9 485.9L88.9 492.8L89.8 496.6L90.6 499.8L91.5 503.6L92.3 506.8L93.2 508.2L94.0 508.5L94.9 506.3L95.7 507.5L96.6 524.1L97.4 536.0L98.3 518.2L99.1 496.7L100.0 491.9L100.8 494.7L101.7 506.3L102.5 515.3L103.4 504.9L104.2 492.2L105.1 492.6L105.9 494.7L106.8 489.2L107.6 484.8L108.5 489.7L109.3 495.8L110.2 495.1L111.0 495.5L111.9 507.2L112.7 516.4L113.6 507.1L114.4 495.7L115.3 496.1L116.1 499.4L117.0 500.3L117.8 502.2L118.7 508.9L119.5 513.0L120.4 503.1L121.2 495.7L122.1 510.7L122.9 527.1L123.8 527.4L124.6 520.2L125.5 504.3L126.3 491.3L127.2 497.3L128.0 507.4L128.9 511.0L129.7 510.4L130.6 500.3L131.4 492.9L132.3 506.2L133.1 518.2L134.0 505.5L134.8 490.2L135.7 491.2L136.5 494.7L137.3 491.6L138.2 487.6L139.0 486.1L139.9 485.5L140.7 483.5L141.6 485.2L142.4 500.0L143.3 512.8L144.1 507.9L145.0 497.5L145.8 483.3L146.7 482.1L147.5 530.6L148.4 570.0L149.2 529.9L150.1 480.8L150.9 483.9L151.8 496.5L152.6 488.9L153.5 484.3L154.3 503.9L155.2 523.2L156.0 519.6L156.9 507.7L157.7 490.0L158.6 479.5L159.4 499.2L160.3 520.5L161.1 516.8L162.0 506.1L162.8 497.1L163.7 491.9L164.5 500.1L165.4 507.8L166.2 499.6L167.1 489.5L167.9 489.4L168.8 490.8L169.6 487.2L170.5 485.0L171.3 491.4L172.2 497.4L173.0 493.3L173.9 489.2L174.7 494.5L175.6 501.4L176.4 505.9L177.3 507.1L178.1 500.5L179.0 493.0L179.8 490.5L180.7 491.4L181.5 497.5L182.4 503.6L183.2 504.2L184.1 502.2L184.9 498.6L185.8 494.3L186.6 490.3L187.5 488.5L188.3 492.6L189.2 498.2L190.0 501.8L190.9 503.9L191.7 503.4L192.6 502.1L193.4 502.2L194.3 501.7L195.1 498.3L196.0 494.9L196.8 493.5L197.7 493.8L198.5 496.6L199.4 500.6L200.2 504.9L201.1 508.7L201.9 511.8L202.8 511.9L203.6 504.2L204.5 496.1L205.3 494.6L206.2 495.4L207.0 497.5L207.9 498.7L208.7 494.8L209.6 490.9L210.4 492.0L211.3 493.7L212.1 492.3L213.0 490.7L213.8 490.0L214.7 491.0L215.5 495.9L216.4 501.6L217.2 507.0L218.1 508.2L218.9 496.5L219.8 486.4L220.6 496.0L221.5 506.6L222.3 500.8L223.2 493.3L224.0 494.9L224.9 499.7L225.7 505.8L226.6 512.2L227.4 519.2L228.3 521.2L229.1 506.9L230.0 493.5L230.8 499.0L231.7 508.2L232.5 510.3L233.4 509.4L234.2 505.3L235.1 500.1L235.9 496.0L236.8 493.2L237.6 493.8L238.5 493.7L239.3 486.5L240.2 481.3L241.0 487.9L241.9 497.5L242.7 505.1L243.6 509.0L244.4 502.5L245.3 495.2L246.1 496.8L247.0 499.9L247.8 497.9L248.7 497.9L249.5 509.6L250.4 517.7L251.2 503.5L252.1 486.6L252.9 483.5L253.8 485.0L254.6 487.0L255.5 490.9L256.3 499.1L257.2 505.8L258.0 503.8L258.9 499.6L259.7 497.6L260.6 496.0L261.4 494.3L262.3 492.8L263.1 491.0L264.0 490.8L264.8 494.5L265.7 501.4L266.5 516.5L267.4 526.1L268.2 510.7L269.1 493.7L269.9 498.5L270.8 506.2L271.6 502.8L272.5 497.1L273.3 493.3L274.2 491.5L275.0 495.9L275.9 499.2L276.7 492.1L277.6 484.9L278.4 488.3L279.3 491.4L280.1 481.0L281.0 474.5L281.8 493.9L282.7 512.3L283.5 500.8L284.4 487.8L285.2 500.9L286.1 514.2L286.9 503.1L287.8 490.5L288.6 495.9L289.5 505.2L290.3 510.5L291.2 513.2L292.0 511.1L292.9 506.2L293.7 497.1L294.6 491.0L295.4 499.2L296.3 508.2L297.1 504.2L298.0 499.3L298.8 504.7L299.7 508.9L300.5 501.1L301.4 491.2L302.2 485.6L303.1 484.1L303.9 491.8L304.8 498.9L305.6 494.2L306.5 486.9L307.3 481.4L308.2 481.3L309.0 497.5L309.9 512.1L310.7 503.0L311.6 492.7L312.4 500.9L313.3 514.3L314.3 530.5L315.2 537.0L316.0 509.9L316.7 481.4L317.5 482.1L318.4 492.7L319.2 505.3L320.1 515.3L320.9 512.2L321.8 505.4L322.6 500.6L323.5 498.2L324.3 501.7L325.2 506.6L326.0 509.4L326.9 510.2L327.7 506.8L328.6 502.7L329.6 501.3L330.3 500.9L330.8 496.0L332.1 526.8L332.3 529.1L332.6 532.2L332.9 535.9L333.3 539.9L333.8 543.8L334.4 547.3L335.1 550.5L335.8 553.6L336.7 556.7L337.6 559.7L338.5 562.5L339.5 565.2L340.5 567.7L341.5 570.1L342.5 572.3L343.6 574.4L344.7 576.3L345.9 578.0L347.1 579.5L348.3 580.7L349.5 581.7L350.7 582.7L352.1 583.5L353.6 584.4L355.4 585.3L357.4 586.1L359.5 586.8L361.6 587.5L363.3 588.1L364.5 588.5" fill="none" stroke="#1a9cf0" stroke-width="1.2" stroke-linejoin="round" opacity="0.93"/></g><rect x="52.5" y="454.5" width="313" height="165" fill="none" stroke="#8a8a8a" stroke-width="1"/><text x="74.3" y="637" font-size="11.4" fill="#787878" text-anchor="middle">-1</text><text x="139.8" y="637" font-size="11.4" fill="#787878" text-anchor="middle">-0.5</text><text x="212.6" y="637" font-size="11.4" fill="#787878" text-anchor="middle">0</text><text x="278.6" y="637" font-size="11.4" fill="#787878" text-anchor="middle">0.5</text><text x="350.0" y="637" font-size="11.4" fill="#787878" text-anchor="middle">1</text><text x="47" y="466.5" font-size="11.4" fill="#787878" text-anchor="end">-80</text><text x="47" y="510.2" font-size="11.4" fill="#787878" text-anchor="end">-90</text><text x="47" y="554.0" font-size="11.4" fill="#787878" text-anchor="end">-100</text><text x="47" y="597.8" font-size="11.4" fill="#787878" text-anchor="end">-110</text><text x="209.0" y="654" font-size="12" fill="#787878" text-anchor="middle">Frequency (MHz)</text><text transform="translate(17.3,537.0) rotate(-90)" font-size="12" fill="#787878" text-anchor="middle">PSD (dBW / Hz)</text><rect x="710" y="273" width="180" height="180" fill="#000"/><rect x="734" y="273" width="1" height="180" fill="#212121"/><rect x="766" y="273" width="1" height="180" fill="#212121"/><rect x="799" y="273" width="1" height="180" fill="#212121"/><rect x="831" y="273" width="1" height="180" fill="#212121"/><rect x="864" y="273" width="1" height="180" fill="#212121"/><rect x="710" y="298" width="180" height="1" fill="#212121"/><rect x="710" y="331" width="180" height="1" fill="#212121"/><rect x="710" y="364" width="180" height="1" fill="#212121"/><rect x="710" y="396" width="180" height="1" fill="#212121"/><rect x="710" y="429" width="180" height="1" fill="#212121"/><clipPath id="c5"><rect x="710" y="273" width="181.5" height="180"/></clipPath><g clip-path="url(#c5)"><path d="M781.9 280.5h9.2M786.5 275.9v9.2M783.1 277.1l6.8 6.8M783.1 283.9l6.8 -6.8M727.9 286.5h9.2M732.5 281.9v9.2M729.1 283.1l6.8 6.8M729.1 289.9l6.8 -6.8M741.9 285.5h9.2M746.5 280.9v9.2M743.1 282.1l6.8 6.8M743.1 288.9l6.8 -6.8M750.9 288.5h9.2M755.5 283.9v9.2M752.1 285.1l6.8 6.8M752.1 291.9l6.8 -6.8M724.9 293.5h9.2M729.5 288.9v9.2M726.1 290.1l6.8 6.8M726.1 296.9l6.8 -6.8M730.9 296.5h9.2M735.5 291.9v9.2M732.1 293.1l6.8 6.8M732.1 299.9l6.8 -6.8M711.9 304.5h9.2M716.5 299.9v9.2M713.1 301.1l6.8 6.8M713.1 307.9l6.8 -6.8M718.9 311.5h9.2M723.5 306.9v9.2M720.1 308.1l6.8 6.8M720.1 314.9l6.8 -6.8M717.9 314.5h9.2M722.5 309.9v9.2M719.1 311.1l6.8 6.8M719.1 317.9l6.8 -6.8M781.9 300.5h9.2M786.5 295.9v9.2M783.1 297.1l6.8 6.8M783.1 303.9l6.8 -6.8M774.9 301.5h9.2M779.5 296.9v9.2M776.1 298.1l6.8 6.8M776.1 304.9l6.8 -6.8M794.9 320.5h9.2M799.5 315.9v9.2M796.1 317.1l6.8 6.8M796.1 323.9l6.8 -6.8M708.9 350.5h9.2M713.5 345.9v9.2M710.1 347.1l6.8 6.8M710.1 353.9l6.8 -6.8M726.9 351.5h9.2M731.5 346.9v9.2M728.1 348.1l6.8 6.8M728.1 354.9l6.8 -6.8M742.9 353.5h9.2M747.5 348.9v9.2M744.1 350.1l6.8 6.8M744.1 356.9l6.8 -6.8M733.9 360.5h9.2M738.5 355.9v9.2M735.1 357.1l6.8 6.8M735.1 363.9l6.8 -6.8M761.9 358.5h9.2M766.5 353.9v9.2M763.1 355.1l6.8 6.8M763.1 361.9l6.8 -6.8M776.9 352.5h9.2M781.5 347.9v9.2M778.1 349.1l6.8 6.8M778.1 355.9l6.8 -6.8M772.9 343.5h9.2M777.5 338.9v9.2M774.1 340.1l6.8 6.8M774.1 346.9l6.8 -6.8M763.9 346.5h9.2M768.5 341.9v9.2M765.1 343.1l6.8 6.8M765.1 349.9l6.8 -6.8M755.9 346.5h9.2M760.5 341.9v9.2M757.1 343.1l6.8 6.8M757.1 349.9l6.8 -6.8M723.9 324.5h9.2M728.5 319.9v9.2M725.1 321.1l6.8 6.8M725.1 327.9l6.8 -6.8M724.9 330.5h9.2M729.5 325.9v9.2M726.1 327.1l6.8 6.8M726.1 333.9l6.8 -6.8M729.9 337.5h9.2M734.5 332.9v9.2M731.1 334.1l6.8 6.8M731.1 340.9l6.8 -6.8M739.9 294.5h9.2M744.5 289.9v9.2M741.1 291.1l6.8 6.8M741.1 297.9l6.8 -6.8M739.9 293.5h9.2M744.5 288.9v9.2M741.1 290.1l6.8 6.8M741.1 296.9l6.8 -6.8M743.9 297.5h9.2M748.5 292.9v9.2M745.1 294.1l6.8 6.8M745.1 300.9l6.8 -6.8M747.9 296.5h9.2M752.5 291.9v9.2M749.1 293.1l6.8 6.8M749.1 299.9l6.8 -6.8M750.9 300.5h9.2M755.5 295.9v9.2M752.1 297.1l6.8 6.8M752.1 303.9l6.8 -6.8M747.9 302.5h9.2M752.5 297.9v9.2M749.1 299.1l6.8 6.8M749.1 305.9l6.8 -6.8M744.9 302.5h9.2M749.5 297.9v9.2M746.1 299.1l6.8 6.8M746.1 305.9l6.8 -6.8M743.9 304.5h9.2M748.5 299.9v9.2M745.1 301.1l6.8 6.8M745.1 307.9l6.8 -6.8M740.9 304.5h9.2M745.5 299.9v9.2M742.1 301.1l6.8 6.8M742.1 307.9l6.8 -6.8M742.9 304.5h9.2M747.5 299.9v9.2M744.1 301.1l6.8 6.8M744.1 307.9l6.8 -6.8M736.9 307.5h9.2M741.5 302.9v9.2M738.1 304.1l6.8 6.8M738.1 310.9l6.8 -6.8M748.9 305.5h9.2M753.5 300.9v9.2M750.1 302.1l6.8 6.8M750.1 308.9l6.8 -6.8M749.9 307.5h9.2M754.5 302.9v9.2M751.1 304.1l6.8 6.8M751.1 310.9l6.8 -6.8M752.9 304.5h9.2M757.5 299.9v9.2M754.1 301.1l6.8 6.8M754.1 307.9l6.8 -6.8M754.9 305.5h9.2M759.5 300.9v9.2M756.1 302.1l6.8 6.8M756.1 308.9l6.8 -6.8M743.9 308.5h9.2M748.5 303.9v9.2M745.1 305.1l6.8 6.8M745.1 311.9l6.8 -6.8M744.9 309.5h9.2M749.5 304.9v9.2M746.1 306.1l6.8 6.8M746.1 312.9l6.8 -6.8M739.9 312.5h9.2M744.5 307.9v9.2M741.1 309.1l6.8 6.8M741.1 315.9l6.8 -6.8M736.9 314.5h9.2M741.5 309.9v9.2M738.1 311.1l6.8 6.8M738.1 317.9l6.8 -6.8M737.9 316.5h9.2M742.5 311.9v9.2M739.1 313.1l6.8 6.8M739.1 319.9l6.8 -6.8M738.9 318.5h9.2M743.5 313.9v9.2M740.1 315.1l6.8 6.8M740.1 321.9l6.8 -6.8M761.9 291.5h9.2M766.5 286.9v9.2M763.1 288.1l6.8 6.8M763.1 294.9l6.8 -6.8M764.9 293.5h9.2M769.5 288.9v9.2M766.1 290.1l6.8 6.8M766.1 296.9l6.8 -6.8M769.9 294.5h9.2M774.5 289.9v9.2M771.1 291.1l6.8 6.8M771.1 297.9l6.8 -6.8M770.9 293.5h9.2M775.5 288.9v9.2M772.1 290.1l6.8 6.8M772.1 296.9l6.8 -6.8M763.9 298.5h9.2M768.5 293.9v9.2M765.1 295.1l6.8 6.8M765.1 301.9l6.8 -6.8M768.9 307.5h9.2M773.5 302.9v9.2M770.1 304.1l6.8 6.8M770.1 310.9l6.8 -6.8M769.9 310.5h9.2M774.5 305.9v9.2M771.1 307.1l6.8 6.8M771.1 313.9l6.8 -6.8M767.9 309.5h9.2M772.5 304.9v9.2M769.1 306.1l6.8 6.8M769.1 312.9l6.8 -6.8M758.9 314.5h9.2M763.5 309.9v9.2M760.1 311.1l6.8 6.8M760.1 317.9l6.8 -6.8M755.9 318.5h9.2M760.5 313.9v9.2M757.1 315.1l6.8 6.8M757.1 321.9l6.8 -6.8M756.9 317.5h9.2M761.5 312.9v9.2M758.1 314.1l6.8 6.8M758.1 320.9l6.8 -6.8M761.9 319.5h9.2M766.5 314.9v9.2M763.1 316.1l6.8 6.8M763.1 322.9l6.8 -6.8M760.9 318.5h9.2M765.5 313.9v9.2M762.1 315.1l6.8 6.8M762.1 321.9l6.8 -6.8M751.9 320.5h9.2M756.5 315.9v9.2M753.1 317.1l6.8 6.8M753.1 323.9l6.8 -6.8M752.9 322.5h9.2M757.5 317.9v9.2M754.1 319.1l6.8 6.8M754.1 325.9l6.8 -6.8M758.9 323.5h9.2M763.5 318.9v9.2M760.1 320.1l6.8 6.8M760.1 326.9l6.8 -6.8M763.9 324.5h9.2M768.5 319.9v9.2M765.1 321.1l6.8 6.8M765.1 327.9l6.8 -6.8M730.9 326.5h9.2M735.5 321.9v9.2M732.1 323.1l6.8 6.8M732.1 329.9l6.8 -6.8M735.9 325.5h9.2M740.5 320.9v9.2M737.1 322.1l6.8 6.8M737.1 328.9l6.8 -6.8M733.9 330.5h9.2M738.5 325.9v9.2M735.1 327.1l6.8 6.8M735.1 333.9l6.8 -6.8M737.9 331.5h9.2M742.5 326.9v9.2M739.1 328.1l6.8 6.8M739.1 334.9l6.8 -6.8M739.9 334.5h9.2M744.5 329.9v9.2M741.1 331.1l6.8 6.8M741.1 337.9l6.8 -6.8M740.9 327.5h9.2M745.5 322.9v9.2M742.1 324.1l6.8 6.8M742.1 330.9l6.8 -6.8M744.9 329.5h9.2M749.5 324.9v9.2M746.1 326.1l6.8 6.8M746.1 332.9l6.8 -6.8M745.9 327.5h9.2M750.5 322.9v9.2M747.1 324.1l6.8 6.8M747.1 330.9l6.8 -6.8M748.9 326.5h9.2M753.5 321.9v9.2M750.1 323.1l6.8 6.8M750.1 329.9l6.8 -6.8M750.9 331.5h9.2M755.5 326.9v9.2M752.1 328.1l6.8 6.8M752.1 334.9l6.8 -6.8M749.9 329.5h9.2M754.5 324.9v9.2M751.1 326.1l6.8 6.8M751.1 332.9l6.8 -6.8M752.9 329.5h9.2M757.5 324.9v9.2M754.1 326.1l6.8 6.8M754.1 332.9l6.8 -6.8M755.9 333.5h9.2M760.5 328.9v9.2M757.1 330.1l6.8 6.8M757.1 336.9l6.8 -6.8M744.9 334.5h9.2M749.5 329.9v9.2M746.1 331.1l6.8 6.8M746.1 337.9l6.8 -6.8M746.9 334.5h9.2M751.5 329.9v9.2M748.1 331.1l6.8 6.8M748.1 337.9l6.8 -6.8M739.9 335.5h9.2M744.5 330.9v9.2M741.1 332.1l6.8 6.8M741.1 338.9l6.8 -6.8M738.9 336.5h9.2M743.5 331.9v9.2M740.1 333.1l6.8 6.8M740.1 339.9l6.8 -6.8M761.9 331.5h9.2M766.5 326.9v9.2M763.1 328.1l6.8 6.8M763.1 334.9l6.8 -6.8M765.9 334.5h9.2M770.5 329.9v9.2M767.1 331.1l6.8 6.8M767.1 337.9l6.8 -6.8M765.9 332.5h9.2M770.5 327.9v9.2M767.1 329.1l6.8 6.8M767.1 335.9l6.8 -6.8M769.9 329.5h9.2M774.5 324.9v9.2M771.1 326.1l6.8 6.8M771.1 332.9l6.8 -6.8M773.9 327.5h9.2M778.5 322.9v9.2M775.1 324.1l6.8 6.8M775.1 330.9l6.8 -6.8M775.9 330.5h9.2M780.5 325.9v9.2M777.1 327.1l6.8 6.8M777.1 333.9l6.8 -6.8M777.9 326.5h9.2M782.5 321.9v9.2M779.1 323.1l6.8 6.8M779.1 329.9l6.8 -6.8M780.9 325.5h9.2M785.5 320.9v9.2M782.1 322.1l6.8 6.8M782.1 328.9l6.8 -6.8M777.9 331.5h9.2M782.5 326.9v9.2M779.1 328.1l6.8 6.8M779.1 334.9l6.8 -6.8M778.9 329.5h9.2M783.5 324.9v9.2M780.1 326.1l6.8 6.8M780.1 332.9l6.8 -6.8M774.9 330.5h9.2M779.5 325.9v9.2M776.1 327.1l6.8 6.8M776.1 333.9l6.8 -6.8M774.9 331.5h9.2M779.5 326.9v9.2M776.1 328.1l6.8 6.8M776.1 334.9l6.8 -6.8M758.9 336.5h9.2M763.5 331.9v9.2M760.1 333.1l6.8 6.8M760.1 339.9l6.8 -6.8M756.9 337.5h9.2M761.5 332.9v9.2M758.1 334.1l6.8 6.8M758.1 340.9l6.8 -6.8M751.9 338.5h9.2M756.5 333.9v9.2M753.1 335.1l6.8 6.8M753.1 341.9l6.8 -6.8M753.9 340.5h9.2M758.5 335.9v9.2M755.1 337.1l6.8 6.8M755.1 343.9l6.8 -6.8M762.9 338.5h9.2M767.5 333.9v9.2M764.1 335.1l6.8 6.8M764.1 341.9l6.8 -6.8M762.9 338.5h9.2M767.5 333.9v9.2M764.1 335.1l6.8 6.8M764.1 341.9l6.8 -6.8M842.9 286.5h9.2M847.5 281.9v9.2M844.1 283.1l6.8 6.8M844.1 289.9l6.8 -6.8M836.9 292.5h9.2M841.5 287.9v9.2M838.1 289.1l6.8 6.8M838.1 295.9l6.8 -6.8M828.9 292.5h9.2M833.5 287.9v9.2M830.1 289.1l6.8 6.8M830.1 295.9l6.8 -6.8M827.9 296.5h9.2M832.5 291.9v9.2M829.1 293.1l6.8 6.8M829.1 299.9l6.8 -6.8M830.9 301.5h9.2M835.5 296.9v9.2M832.1 298.1l6.8 6.8M832.1 304.9l6.8 -6.8M796.9 320.5h9.2M801.5 315.9v9.2M798.1 317.1l6.8 6.8M798.1 323.9l6.8 -6.8M801.9 311.5h9.2M806.5 306.9v9.2M803.1 308.1l6.8 6.8M803.1 314.9l6.8 -6.8M806.9 302.5h9.2M811.5 297.9v9.2M808.1 299.1l6.8 6.8M808.1 305.9l6.8 -6.8M807.9 307.5h9.2M812.5 302.9v9.2M809.1 304.1l6.8 6.8M809.1 310.9l6.8 -6.8M814.9 302.5h9.2M819.5 297.9v9.2M816.1 299.1l6.8 6.8M816.1 305.9l6.8 -6.8M806.9 331.5h9.2M811.5 326.9v9.2M808.1 328.1l6.8 6.8M808.1 334.9l6.8 -6.8M812.9 339.5h9.2M817.5 334.9v9.2M814.1 336.1l6.8 6.8M814.1 342.9l6.8 -6.8M811.9 346.5h9.2M816.5 341.9v9.2M813.1 343.1l6.8 6.8M813.1 349.9l6.8 -6.8M813.9 351.5h9.2M818.5 346.9v9.2M815.1 348.1l6.8 6.8M815.1 354.9l6.8 -6.8M824.9 355.5h9.2M829.5 350.9v9.2M826.1 352.1l6.8 6.8M826.1 358.9l6.8 -6.8M834.9 362.5h9.2M839.5 357.9v9.2M836.1 359.1l6.8 6.8M836.1 365.9l6.8 -6.8M836.9 345.5h9.2M841.5 340.9v9.2M838.1 342.1l6.8 6.8M838.1 348.9l6.8 -6.8M829.9 338.5h9.2M834.5 333.9v9.2M831.1 335.1l6.8 6.8M831.1 341.9l6.8 -6.8M851.9 347.5h9.2M856.5 342.9v9.2M853.1 344.1l6.8 6.8M853.1 350.9l6.8 -6.8M860.9 346.5h9.2M865.5 341.9v9.2M862.1 343.1l6.8 6.8M862.1 349.9l6.8 -6.8M853.9 353.5h9.2M858.5 348.9v9.2M855.1 350.1l6.8 6.8M855.1 356.9l6.8 -6.8M858.9 356.5h9.2M863.5 351.9v9.2M860.1 353.1l6.8 6.8M860.1 359.9l6.8 -6.8M853.9 358.5h9.2M858.5 353.9v9.2M855.1 355.1l6.8 6.8M855.1 361.9l6.8 -6.8M875.9 332.5h9.2M880.5 327.9v9.2M877.1 329.1l6.8 6.8M877.1 335.9l6.8 -6.8M877.9 308.5h9.2M882.5 303.9v9.2M879.1 305.1l6.8 6.8M879.1 311.9l6.8 -6.8M871.9 307.5h9.2M876.5 302.9v9.2M873.1 304.1l6.8 6.8M873.1 310.9l6.8 -6.8M862.9 305.5h9.2M867.5 300.9v9.2M864.1 302.1l6.8 6.8M864.1 308.9l6.8 -6.8M869.9 312.5h9.2M874.5 307.9v9.2M871.1 309.1l6.8 6.8M871.1 315.9l6.8 -6.8M860.9 312.5h9.2M865.5 307.9v9.2M862.1 309.1l6.8 6.8M862.1 315.9l6.8 -6.8M864.9 323.5h9.2M869.5 318.9v9.2M866.1 320.1l6.8 6.8M866.1 326.9l6.8 -6.8M866.9 327.5h9.2M871.5 322.9v9.2M868.1 324.1l6.8 6.8M868.1 330.9l6.8 -6.8M853.9 301.5h9.2M858.5 296.9v9.2M855.1 298.1l6.8 6.8M855.1 304.9l6.8 -6.8M842.9 296.5h9.2M847.5 291.9v9.2M844.1 293.1l6.8 6.8M844.1 299.9l6.8 -6.8M846.9 298.5h9.2M851.5 293.9v9.2M848.1 295.1l6.8 6.8M848.1 301.9l6.8 -6.8M846.9 299.5h9.2M851.5 294.9v9.2M848.1 296.1l6.8 6.8M848.1 302.9l6.8 -6.8M848.9 297.5h9.2M853.5 292.9v9.2M850.1 294.1l6.8 6.8M850.1 300.9l6.8 -6.8M845.9 301.5h9.2M850.5 296.9v9.2M847.1 298.1l6.8 6.8M847.1 304.9l6.8 -6.8M844.9 302.5h9.2M849.5 297.9v9.2M846.1 299.1l6.8 6.8M846.1 305.9l6.8 -6.8M849.9 301.5h9.2M854.5 296.9v9.2M851.1 298.1l6.8 6.8M851.1 304.9l6.8 -6.8M848.9 303.5h9.2M853.5 298.9v9.2M850.1 300.1l6.8 6.8M850.1 306.9l6.8 -6.8M816.9 305.5h9.2M821.5 300.9v9.2M818.1 302.1l6.8 6.8M818.1 308.9l6.8 -6.8M817.9 303.5h9.2M822.5 298.9v9.2M819.1 300.1l6.8 6.8M819.1 306.9l6.8 -6.8M818.9 309.5h9.2M823.5 304.9v9.2M820.1 306.1l6.8 6.8M820.1 312.9l6.8 -6.8M819.9 307.5h9.2M824.5 302.9v9.2M821.1 304.1l6.8 6.8M821.1 310.9l6.8 -6.8M820.9 314.5h9.2M825.5 309.9v9.2M822.1 311.1l6.8 6.8M822.1 317.9l6.8 -6.8M818.9 318.5h9.2M823.5 313.9v9.2M820.1 315.1l6.8 6.8M820.1 321.9l6.8 -6.8M817.9 322.5h9.2M822.5 317.9v9.2M819.1 319.1l6.8 6.8M819.1 325.9l6.8 -6.8M818.9 322.5h9.2M823.5 317.9v9.2M820.1 319.1l6.8 6.8M820.1 325.9l6.8 -6.8M815.9 325.5h9.2M820.5 320.9v9.2M817.1 322.1l6.8 6.8M817.1 328.9l6.8 -6.8M819.9 326.5h9.2M824.5 321.9v9.2M821.1 323.1l6.8 6.8M821.1 329.9l6.8 -6.8M820.9 327.5h9.2M825.5 322.9v9.2M822.1 324.1l6.8 6.8M822.1 330.9l6.8 -6.8M822.9 322.5h9.2M827.5 317.9v9.2M824.1 319.1l6.8 6.8M824.1 325.9l6.8 -6.8M820.9 323.5h9.2M825.5 318.9v9.2M822.1 320.1l6.8 6.8M822.1 326.9l6.8 -6.8M823.9 316.5h9.2M828.5 311.9v9.2M825.1 313.1l6.8 6.8M825.1 319.9l6.8 -6.8M827.9 322.5h9.2M832.5 317.9v9.2M829.1 319.1l6.8 6.8M829.1 325.9l6.8 -6.8M827.9 322.5h9.2M832.5 317.9v9.2M829.1 319.1l6.8 6.8M829.1 325.9l6.8 -6.8M830.9 318.5h9.2M835.5 313.9v9.2M832.1 315.1l6.8 6.8M832.1 321.9l6.8 -6.8M829.9 317.5h9.2M834.5 312.9v9.2M831.1 314.1l6.8 6.8M831.1 320.9l6.8 -6.8M832.9 314.5h9.2M837.5 309.9v9.2M834.1 311.1l6.8 6.8M834.1 317.9l6.8 -6.8M833.9 313.5h9.2M838.5 308.9v9.2M835.1 310.1l6.8 6.8M835.1 316.9l6.8 -6.8M834.9 323.5h9.2M839.5 318.9v9.2M836.1 320.1l6.8 6.8M836.1 326.9l6.8 -6.8M836.9 321.5h9.2M841.5 316.9v9.2M838.1 318.1l6.8 6.8M838.1 324.9l6.8 -6.8M838.9 311.5h9.2M843.5 306.9v9.2M840.1 308.1l6.8 6.8M840.1 314.9l6.8 -6.8M840.9 310.5h9.2M845.5 305.9v9.2M842.1 307.1l6.8 6.8M842.1 313.9l6.8 -6.8M841.9 316.5h9.2M846.5 311.9v9.2M843.1 313.1l6.8 6.8M843.1 319.9l6.8 -6.8M843.9 315.5h9.2M848.5 310.9v9.2M845.1 312.1l6.8 6.8M845.1 318.9l6.8 -6.8M843.9 320.5h9.2M848.5 315.9v9.2M845.1 317.1l6.8 6.8M845.1 323.9l6.8 -6.8M843.9 321.5h9.2M848.5 316.9v9.2M845.1 318.1l6.8 6.8M845.1 324.9l6.8 -6.8M845.9 312.5h9.2M850.5 307.9v9.2M847.1 309.1l6.8 6.8M847.1 315.9l6.8 -6.8M844.9 311.5h9.2M849.5 306.9v9.2M846.1 308.1l6.8 6.8M846.1 314.9l6.8 -6.8M848.9 318.5h9.2M853.5 313.9v9.2M850.1 315.1l6.8 6.8M850.1 321.9l6.8 -6.8M851.9 323.5h9.2M856.5 318.9v9.2M853.1 320.1l6.8 6.8M853.1 326.9l6.8 -6.8M852.9 322.5h9.2M857.5 317.9v9.2M854.1 319.1l6.8 6.8M854.1 325.9l6.8 -6.8M853.9 312.5h9.2M858.5 307.9v9.2M855.1 309.1l6.8 6.8M855.1 315.9l6.8 -6.8M854.9 314.5h9.2M859.5 309.9v9.2M856.1 311.1l6.8 6.8M856.1 317.9l6.8 -6.8M855.9 319.5h9.2M860.5 314.9v9.2M857.1 316.1l6.8 6.8M857.1 322.9l6.8 -6.8M853.9 317.5h9.2M858.5 312.9v9.2M855.1 314.1l6.8 6.8M855.1 320.9l6.8 -6.8M841.9 326.5h9.2M846.5 321.9v9.2M843.1 323.1l6.8 6.8M843.1 329.9l6.8 -6.8M840.9 328.5h9.2M845.5 323.9v9.2M842.1 325.1l6.8 6.8M842.1 331.9l6.8 -6.8M837.9 329.5h9.2M842.5 324.9v9.2M839.1 326.1l6.8 6.8M839.1 332.9l6.8 -6.8M831.9 330.5h9.2M836.5 325.9v9.2M833.1 327.1l6.8 6.8M833.1 333.9l6.8 -6.8M830.9 332.5h9.2M835.5 327.9v9.2M832.1 329.1l6.8 6.8M832.1 335.9l6.8 -6.8M827.9 334.5h9.2M832.5 329.9v9.2M829.1 331.1l6.8 6.8M829.1 337.9l6.8 -6.8M830.9 337.5h9.2M835.5 332.9v9.2M832.1 334.1l6.8 6.8M832.1 340.9l6.8 -6.8M851.9 329.5h9.2M856.5 324.9v9.2M853.1 326.1l6.8 6.8M853.1 332.9l6.8 -6.8M849.9 328.5h9.2M854.5 323.9v9.2M851.1 325.1l6.8 6.8M851.1 331.9l6.8 -6.8M853.9 333.5h9.2M858.5 328.9v9.2M855.1 330.1l6.8 6.8M855.1 336.9l6.8 -6.8M856.9 327.5h9.2M861.5 322.9v9.2M858.1 324.1l6.8 6.8M858.1 330.9l6.8 -6.8M855.9 327.5h9.2M860.5 322.9v9.2M857.1 324.1l6.8 6.8M857.1 330.9l6.8 -6.8M848.9 333.5h9.2M853.5 328.9v9.2M850.1 330.1l6.8 6.8M850.1 336.9l6.8 -6.8M848.9 335.5h9.2M853.5 330.9v9.2M850.1 332.1l6.8 6.8M850.1 338.9l6.8 -6.8M844.9 338.5h9.2M849.5 333.9v9.2M846.1 335.1l6.8 6.8M846.1 341.9l6.8 -6.8M841.9 341.5h9.2M846.5 336.9v9.2M843.1 338.1l6.8 6.8M843.1 344.9l6.8 -6.8M842.9 342.5h9.2M847.5 337.9v9.2M844.1 339.1l6.8 6.8M844.1 345.9l6.8 -6.8M826.9 326.5h9.2M831.5 321.9v9.2M828.1 323.1l6.8 6.8M828.1 329.9l6.8 -6.8M825.9 320.5h9.2M830.5 315.9v9.2M827.1 317.1l6.8 6.8M827.1 323.9l6.8 -6.8M827.9 323.5h9.2M832.5 318.9v9.2M829.1 320.1l6.8 6.8M829.1 326.9l6.8 -6.8M791.9 367.5h9.2M796.5 362.9v9.2M793.1 364.1l6.8 6.8M793.1 370.9l6.8 -6.8M770.9 369.5h9.2M775.5 364.9v9.2M772.1 366.1l6.8 6.8M772.1 372.9l6.8 -6.8M777.9 372.5h9.2M782.5 367.9v9.2M779.1 369.1l6.8 6.8M779.1 375.9l6.8 -6.8M737.9 372.5h9.2M742.5 367.9v9.2M739.1 369.1l6.8 6.8M739.1 375.9l6.8 -6.8M759.9 379.5h9.2M764.5 374.9v9.2M761.1 376.1l6.8 6.8M761.1 382.9l6.8 -6.8M766.9 377.5h9.2M771.5 372.9v9.2M768.1 374.1l6.8 6.8M768.1 380.9l6.8 -6.8M771.9 381.5h9.2M776.5 376.9v9.2M773.1 378.1l6.8 6.8M773.1 384.9l6.8 -6.8M775.9 381.5h9.2M780.5 376.9v9.2M777.1 378.1l6.8 6.8M777.1 384.9l6.8 -6.8M716.9 386.5h9.2M721.5 381.9v9.2M718.1 383.1l6.8 6.8M718.1 389.9l6.8 -6.8M716.9 389.5h9.2M721.5 384.9v9.2M718.1 386.1l6.8 6.8M718.1 392.9l6.8 -6.8M711.9 400.5h9.2M716.5 395.9v9.2M713.1 397.1l6.8 6.8M713.1 403.9l6.8 -6.8M708.9 434.5h9.2M713.5 429.9v9.2M710.1 431.1l6.8 6.8M710.1 437.9l6.8 -6.8M726.9 441.5h9.2M731.5 436.9v9.2M728.1 438.1l6.8 6.8M728.1 444.9l6.8 -6.8M795.9 429.5h9.2M800.5 424.9v9.2M797.1 426.1l6.8 6.8M797.1 432.9l6.8 -6.8M778.9 431.5h9.2M783.5 426.9v9.2M780.1 428.1l6.8 6.8M780.1 434.9l6.8 -6.8M779.9 432.5h9.2M784.5 427.9v9.2M781.1 429.1l6.8 6.8M781.1 435.9l6.8 -6.8M783.9 420.5h9.2M788.5 415.9v9.2M785.1 417.1l6.8 6.8M785.1 423.9l6.8 -6.8M787.9 400.5h9.2M792.5 395.9v9.2M789.1 397.1l6.8 6.8M789.1 403.9l6.8 -6.8M788.9 405.5h9.2M793.5 400.9v9.2M790.1 402.1l6.8 6.8M790.1 408.9l6.8 -6.8M784.9 410.5h9.2M789.5 405.9v9.2M786.1 407.1l6.8 6.8M786.1 413.9l6.8 -6.8M777.9 396.5h9.2M782.5 391.9v9.2M779.1 393.1l6.8 6.8M779.1 399.9l6.8 -6.8M776.9 400.5h9.2M781.5 395.9v9.2M778.1 397.1l6.8 6.8M778.1 403.9l6.8 -6.8M774.9 409.5h9.2M779.5 404.9v9.2M776.1 406.1l6.8 6.8M776.1 412.9l6.8 -6.8M720.9 420.5h9.2M725.5 415.9v9.2M722.1 417.1l6.8 6.8M722.1 423.9l6.8 -6.8M737.9 420.5h9.2M742.5 415.9v9.2M739.1 417.1l6.8 6.8M739.1 423.9l6.8 -6.8M763.9 387.5h9.2M768.5 382.9v9.2M765.1 384.1l6.8 6.8M765.1 390.9l6.8 -6.8M766.9 392.5h9.2M771.5 387.9v9.2M768.1 389.1l6.8 6.8M768.1 395.9l6.8 -6.8M734.9 377.5h9.2M739.5 372.9v9.2M736.1 374.1l6.8 6.8M736.1 380.9l6.8 -6.8M735.9 379.5h9.2M740.5 374.9v9.2M737.1 376.1l6.8 6.8M737.1 382.9l6.8 -6.8M740.9 378.5h9.2M745.5 373.9v9.2M742.1 375.1l6.8 6.8M742.1 381.9l6.8 -6.8M732.9 384.5h9.2M737.5 379.9v9.2M734.1 381.1l6.8 6.8M734.1 387.9l6.8 -6.8M731.9 383.5h9.2M736.5 378.9v9.2M733.1 380.1l6.8 6.8M733.1 386.9l6.8 -6.8M737.9 385.5h9.2M742.5 380.9v9.2M739.1 382.1l6.8 6.8M739.1 388.9l6.8 -6.8M735.9 386.5h9.2M740.5 381.9v9.2M737.1 383.1l6.8 6.8M737.1 389.9l6.8 -6.8M743.9 384.5h9.2M748.5 379.9v9.2M745.1 381.1l6.8 6.8M745.1 387.9l6.8 -6.8M744.9 382.5h9.2M749.5 377.9v9.2M746.1 379.1l6.8 6.8M746.1 385.9l6.8 -6.8M746.9 388.5h9.2M751.5 383.9v9.2M748.1 385.1l6.8 6.8M748.1 391.9l6.8 -6.8M750.9 389.5h9.2M755.5 384.9v9.2M752.1 386.1l6.8 6.8M752.1 392.9l6.8 -6.8M728.9 391.5h9.2M733.5 386.9v9.2M730.1 388.1l6.8 6.8M730.1 394.9l6.8 -6.8M733.9 392.5h9.2M738.5 387.9v9.2M735.1 389.1l6.8 6.8M735.1 395.9l6.8 -6.8M724.9 398.5h9.2M729.5 393.9v9.2M726.1 395.1l6.8 6.8M726.1 401.9l6.8 -6.8M728.9 402.5h9.2M733.5 397.9v9.2M730.1 399.1l6.8 6.8M730.1 405.9l6.8 -6.8M725.9 403.5h9.2M730.5 398.9v9.2M727.1 400.1l6.8 6.8M727.1 406.9l6.8 -6.8M730.9 406.5h9.2M735.5 401.9v9.2M732.1 403.1l6.8 6.8M732.1 409.9l6.8 -6.8M729.9 407.5h9.2M734.5 402.9v9.2M731.1 404.1l6.8 6.8M731.1 410.9l6.8 -6.8M735.9 399.5h9.2M740.5 394.9v9.2M737.1 396.1l6.8 6.8M737.1 402.9l6.8 -6.8M734.9 401.5h9.2M739.5 396.9v9.2M736.1 398.1l6.8 6.8M736.1 404.9l6.8 -6.8M737.9 403.5h9.2M742.5 398.9v9.2M739.1 400.1l6.8 6.8M739.1 406.9l6.8 -6.8M740.9 396.5h9.2M745.5 391.9v9.2M742.1 393.1l6.8 6.8M742.1 399.9l6.8 -6.8M739.9 398.5h9.2M744.5 393.9v9.2M741.1 395.1l6.8 6.8M741.1 401.9l6.8 -6.8M743.9 402.5h9.2M748.5 397.9v9.2M745.1 399.1l6.8 6.8M745.1 405.9l6.8 -6.8M744.9 401.5h9.2M749.5 396.9v9.2M746.1 398.1l6.8 6.8M746.1 404.9l6.8 -6.8M746.9 398.5h9.2M751.5 393.9v9.2M748.1 395.1l6.8 6.8M748.1 401.9l6.8 -6.8M746.9 399.5h9.2M751.5 394.9v9.2M748.1 396.1l6.8 6.8M748.1 402.9l6.8 -6.8M748.9 403.5h9.2M753.5 398.9v9.2M750.1 400.1l6.8 6.8M750.1 406.9l6.8 -6.8M750.9 405.5h9.2M755.5 400.9v9.2M752.1 402.1l6.8 6.8M752.1 408.9l6.8 -6.8M751.9 396.5h9.2M756.5 391.9v9.2M753.1 393.1l6.8 6.8M753.1 399.9l6.8 -6.8M754.9 400.5h9.2M759.5 395.9v9.2M756.1 397.1l6.8 6.8M756.1 403.9l6.8 -6.8M757.9 398.5h9.2M762.5 393.9v9.2M759.1 395.1l6.8 6.8M759.1 401.9l6.8 -6.8M757.9 400.5h9.2M762.5 395.9v9.2M759.1 397.1l6.8 6.8M759.1 403.9l6.8 -6.8M759.9 402.5h9.2M764.5 397.9v9.2M761.1 399.1l6.8 6.8M761.1 405.9l6.8 -6.8M758.9 401.5h9.2M763.5 396.9v9.2M760.1 398.1l6.8 6.8M760.1 404.9l6.8 -6.8M762.9 399.5h9.2M767.5 394.9v9.2M764.1 396.1l6.8 6.8M764.1 402.9l6.8 -6.8M762.9 399.5h9.2M767.5 394.9v9.2M764.1 396.1l6.8 6.8M764.1 402.9l6.8 -6.8M765.9 400.5h9.2M770.5 395.9v9.2M767.1 397.1l6.8 6.8M767.1 403.9l6.8 -6.8M758.9 405.5h9.2M763.5 400.9v9.2M760.1 402.1l6.8 6.8M760.1 408.9l6.8 -6.8M756.9 403.5h9.2M761.5 398.9v9.2M758.1 400.1l6.8 6.8M758.1 406.9l6.8 -6.8M750.9 407.5h9.2M755.5 402.9v9.2M752.1 404.1l6.8 6.8M752.1 410.9l6.8 -6.8M748.9 410.5h9.2M753.5 405.9v9.2M750.1 407.1l6.8 6.8M750.1 413.9l6.8 -6.8M739.9 409.5h9.2M744.5 404.9v9.2M741.1 406.1l6.8 6.8M741.1 412.9l6.8 -6.8M732.9 410.5h9.2M737.5 405.9v9.2M734.1 407.1l6.8 6.8M734.1 413.9l6.8 -6.8M732.9 409.5h9.2M737.5 404.9v9.2M734.1 406.1l6.8 6.8M734.1 412.9l6.8 -6.8M768.9 403.5h9.2M773.5 398.9v9.2M770.1 400.1l6.8 6.8M770.1 406.9l6.8 -6.8M767.9 404.5h9.2M772.5 399.9v9.2M769.1 401.1l6.8 6.8M769.1 407.9l6.8 -6.8M752.9 414.5h9.2M757.5 409.9v9.2M754.1 411.1l6.8 6.8M754.1 417.9l6.8 -6.8M752.9 413.5h9.2M757.5 408.9v9.2M754.1 410.1l6.8 6.8M754.1 416.9l6.8 -6.8M754.9 417.5h9.2M759.5 412.9v9.2M756.1 414.1l6.8 6.8M756.1 420.9l6.8 -6.8M752.9 417.5h9.2M757.5 412.9v9.2M754.1 414.1l6.8 6.8M754.1 420.9l6.8 -6.8M750.9 420.5h9.2M755.5 415.9v9.2M752.1 417.1l6.8 6.8M752.1 423.9l6.8 -6.8M726.9 421.5h9.2M731.5 416.9v9.2M728.1 418.1l6.8 6.8M728.1 424.9l6.8 -6.8M724.9 419.5h9.2M729.5 414.9v9.2M726.1 416.1l6.8 6.8M726.1 422.9l6.8 -6.8M727.9 425.5h9.2M732.5 420.9v9.2M729.1 422.1l6.8 6.8M729.1 428.9l6.8 -6.8M728.9 426.5h9.2M733.5 421.9v9.2M730.1 423.1l6.8 6.8M730.1 429.9l6.8 -6.8M724.9 422.5h9.2M729.5 417.9v9.2M726.1 419.1l6.8 6.8M726.1 425.9l6.8 -6.8M725.9 423.5h9.2M730.5 418.9v9.2M727.1 420.1l6.8 6.8M727.1 426.9l6.8 -6.8M744.9 427.5h9.2M749.5 422.9v9.2M746.1 424.1l6.8 6.8M746.1 430.9l6.8 -6.8M744.9 427.5h9.2M749.5 422.9v9.2M746.1 424.1l6.8 6.8M746.1 430.9l6.8 -6.8M747.9 429.5h9.2M752.5 424.9v9.2M749.1 426.1l6.8 6.8M749.1 432.9l6.8 -6.8M751.9 431.5h9.2M756.5 426.9v9.2M753.1 428.1l6.8 6.8M753.1 434.9l6.8 -6.8M752.9 431.5h9.2M757.5 426.9v9.2M754.1 428.1l6.8 6.8M754.1 434.9l6.8 -6.8M755.9 427.5h9.2M760.5 422.9v9.2M757.1 424.1l6.8 6.8M757.1 430.9l6.8 -6.8M755.9 428.5h9.2M760.5 423.9v9.2M757.1 425.1l6.8 6.8M757.1 431.9l6.8 -6.8M759.9 428.5h9.2M764.5 423.9v9.2M761.1 425.1l6.8 6.8M761.1 431.9l6.8 -6.8M759.9 428.5h9.2M764.5 423.9v9.2M761.1 425.1l6.8 6.8M761.1 431.9l6.8 -6.8M763.9 431.5h9.2M768.5 426.9v9.2M765.1 428.1l6.8 6.8M765.1 434.9l6.8 -6.8M766.9 425.5h9.2M771.5 420.9v9.2M768.1 422.1l6.8 6.8M768.1 428.9l6.8 -6.8M758.9 436.5h9.2M763.5 431.9v9.2M760.1 433.1l6.8 6.8M760.1 439.9l6.8 -6.8M760.9 438.5h9.2M765.5 433.9v9.2M762.1 435.1l6.8 6.8M762.1 441.9l6.8 -6.8M754.9 433.5h9.2M759.5 428.9v9.2M756.1 430.1l6.8 6.8M756.1 436.9l6.8 -6.8M754.9 432.5h9.2M759.5 427.9v9.2M756.1 429.1l6.8 6.8M756.1 435.9l6.8 -6.8M762.9 433.5h9.2M767.5 428.9v9.2M764.1 430.1l6.8 6.8M764.1 436.9l6.8 -6.8M741.9 430.5h9.2M746.5 425.9v9.2M743.1 427.1l6.8 6.8M743.1 433.9l6.8 -6.8M768.9 417.5h9.2M773.5 412.9v9.2M770.1 414.1l6.8 6.8M770.1 420.9l6.8 -6.8M769.9 420.5h9.2M774.5 415.9v9.2M771.1 417.1l6.8 6.8M771.1 423.9l6.8 -6.8M772.9 422.5h9.2M777.5 417.9v9.2M774.1 419.1l6.8 6.8M774.1 425.9l6.8 -6.8M765.9 413.5h9.2M770.5 408.9v9.2M767.1 410.1l6.8 6.8M767.1 416.9l6.8 -6.8M834.9 364.5h9.2M839.5 359.9v9.2M836.1 361.1l6.8 6.8M836.1 367.9l6.8 -6.8M836.9 377.5h9.2M841.5 372.9v9.2M838.1 374.1l6.8 6.8M838.1 380.9l6.8 -6.8M833.9 383.5h9.2M838.5 378.9v9.2M835.1 380.1l6.8 6.8M835.1 386.9l6.8 -6.8M873.9 377.5h9.2M878.5 372.9v9.2M875.1 374.1l6.8 6.8M875.1 380.9l6.8 -6.8M858.9 379.5h9.2M863.5 374.9v9.2M860.1 376.1l6.8 6.8M860.1 382.9l6.8 -6.8M849.9 383.5h9.2M854.5 378.9v9.2M851.1 380.1l6.8 6.8M851.1 386.9l6.8 -6.8M877.9 403.5h9.2M882.5 398.9v9.2M879.1 400.1l6.8 6.8M879.1 406.9l6.8 -6.8M805.9 405.5h9.2M810.5 400.9v9.2M807.1 402.1l6.8 6.8M807.1 408.9l6.8 -6.8M805.9 414.5h9.2M810.5 409.9v9.2M807.1 411.1l6.8 6.8M807.1 417.9l6.8 -6.8M809.9 416.5h9.2M814.5 411.9v9.2M811.1 413.1l6.8 6.8M811.1 419.9l6.8 -6.8M818.9 414.5h9.2M823.5 409.9v9.2M820.1 411.1l6.8 6.8M820.1 417.9l6.8 -6.8M798.9 429.5h9.2M803.5 424.9v9.2M800.1 426.1l6.8 6.8M800.1 432.9l6.8 -6.8M812.9 429.5h9.2M817.5 424.9v9.2M814.1 426.1l6.8 6.8M814.1 432.9l6.8 -6.8M814.9 431.5h9.2M819.5 426.9v9.2M816.1 428.1l6.8 6.8M816.1 434.9l6.8 -6.8M811.9 434.5h9.2M816.5 429.9v9.2M813.1 431.1l6.8 6.8M813.1 437.9l6.8 -6.8M823.9 434.5h9.2M828.5 429.9v9.2M825.1 431.1l6.8 6.8M825.1 437.9l6.8 -6.8M827.9 440.5h9.2M832.5 435.9v9.2M829.1 437.1l6.8 6.8M829.1 443.9l6.8 -6.8M836.9 442.5h9.2M841.5 437.9v9.2M838.1 439.1l6.8 6.8M838.1 445.9l6.8 -6.8M851.9 441.5h9.2M856.5 436.9v9.2M853.1 438.1l6.8 6.8M853.1 444.9l6.8 -6.8M861.9 435.5h9.2M866.5 430.9v9.2M863.1 432.1l6.8 6.8M863.1 438.9l6.8 -6.8M863.9 437.5h9.2M868.5 432.9v9.2M865.1 434.1l6.8 6.8M865.1 440.9l6.8 -6.8M873.9 430.5h9.2M878.5 425.9v9.2M875.1 427.1l6.8 6.8M875.1 433.9l6.8 -6.8M884.9 429.5h9.2M889.5 424.9v9.2M886.1 426.1l6.8 6.8M886.1 432.9l6.8 -6.8M869.9 419.5h9.2M874.5 414.9v9.2M871.1 416.1l6.8 6.8M871.1 422.9l6.8 -6.8M864.9 392.5h9.2M869.5 387.9v9.2M866.1 389.1l6.8 6.8M866.1 395.9l6.8 -6.8M838.9 392.5h9.2M843.5 387.9v9.2M840.1 389.1l6.8 6.8M840.1 395.9l6.8 -6.8M847.9 398.5h9.2M852.5 393.9v9.2M849.1 395.1l6.8 6.8M849.1 401.9l6.8 -6.8M845.9 435.5h9.2M850.5 430.9v9.2M847.1 432.1l6.8 6.8M847.1 438.9l6.8 -6.8M836.9 433.5h9.2M841.5 428.9v9.2M838.1 430.1l6.8 6.8M838.1 436.9l6.8 -6.8M841.9 430.5h9.2M846.5 425.9v9.2M843.1 427.1l6.8 6.8M843.1 433.9l6.8 -6.8M845.9 388.5h9.2M850.5 383.9v9.2M847.1 385.1l6.8 6.8M847.1 391.9l6.8 -6.8M843.9 389.5h9.2M848.5 384.9v9.2M845.1 386.1l6.8 6.8M845.1 392.9l6.8 -6.8M848.9 389.5h9.2M853.5 384.9v9.2M850.1 386.1l6.8 6.8M850.1 392.9l6.8 -6.8M846.9 391.5h9.2M851.5 386.9v9.2M848.1 388.1l6.8 6.8M848.1 394.9l6.8 -6.8M858.9 385.5h9.2M863.5 380.9v9.2M860.1 382.1l6.8 6.8M860.1 388.9l6.8 -6.8M856.9 383.5h9.2M861.5 378.9v9.2M858.1 380.1l6.8 6.8M858.1 386.9l6.8 -6.8M860.9 387.5h9.2M865.5 382.9v9.2M862.1 384.1l6.8 6.8M862.1 390.9l6.8 -6.8M856.9 392.5h9.2M861.5 387.9v9.2M858.1 389.1l6.8 6.8M858.1 395.9l6.8 -6.8M854.9 394.5h9.2M859.5 389.9v9.2M856.1 391.1l6.8 6.8M856.1 397.9l6.8 -6.8M860.9 384.5h9.2M865.5 379.9v9.2M862.1 381.1l6.8 6.8M862.1 387.9l6.8 -6.8M862.9 385.5h9.2M867.5 380.9v9.2M864.1 382.1l6.8 6.8M864.1 388.9l6.8 -6.8M820.9 389.5h9.2M825.5 384.9v9.2M822.1 386.1l6.8 6.8M822.1 392.9l6.8 -6.8M825.9 391.5h9.2M830.5 386.9v9.2M827.1 388.1l6.8 6.8M827.1 394.9l6.8 -6.8M827.9 394.5h9.2M832.5 389.9v9.2M829.1 391.1l6.8 6.8M829.1 397.9l6.8 -6.8M829.9 391.5h9.2M834.5 386.9v9.2M831.1 388.1l6.8 6.8M831.1 394.9l6.8 -6.8M826.9 396.5h9.2M831.5 391.9v9.2M828.1 393.1l6.8 6.8M828.1 399.9l6.8 -6.8M830.9 398.5h9.2M835.5 393.9v9.2M832.1 395.1l6.8 6.8M832.1 401.9l6.8 -6.8M831.9 396.5h9.2M836.5 391.9v9.2M833.1 393.1l6.8 6.8M833.1 399.9l6.8 -6.8M829.9 402.5h9.2M834.5 397.9v9.2M831.1 399.1l6.8 6.8M831.1 405.9l6.8 -6.8M833.9 405.5h9.2M838.5 400.9v9.2M835.1 402.1l6.8 6.8M835.1 408.9l6.8 -6.8M827.9 406.5h9.2M832.5 401.9v9.2M829.1 403.1l6.8 6.8M829.1 409.9l6.8 -6.8M826.9 406.5h9.2M831.5 401.9v9.2M828.1 403.1l6.8 6.8M828.1 409.9l6.8 -6.8M836.9 409.5h9.2M841.5 404.9v9.2M838.1 406.1l6.8 6.8M838.1 412.9l6.8 -6.8M830.9 414.5h9.2M835.5 409.9v9.2M832.1 411.1l6.8 6.8M832.1 417.9l6.8 -6.8M829.9 413.5h9.2M834.5 408.9v9.2M831.1 410.1l6.8 6.8M831.1 416.9l6.8 -6.8M829.9 417.5h9.2M834.5 412.9v9.2M831.1 414.1l6.8 6.8M831.1 420.9l6.8 -6.8M834.9 416.5h9.2M839.5 411.9v9.2M836.1 413.1l6.8 6.8M836.1 419.9l6.8 -6.8M833.9 421.5h9.2M838.5 416.9v9.2M835.1 418.1l6.8 6.8M835.1 424.9l6.8 -6.8M832.9 421.5h9.2M837.5 416.9v9.2M834.1 418.1l6.8 6.8M834.1 424.9l6.8 -6.8M834.9 425.5h9.2M839.5 420.9v9.2M836.1 422.1l6.8 6.8M836.1 428.9l6.8 -6.8M834.9 423.5h9.2M839.5 418.9v9.2M836.1 420.1l6.8 6.8M836.1 426.9l6.8 -6.8M831.9 425.5h9.2M836.5 420.9v9.2M833.1 422.1l6.8 6.8M833.1 428.9l6.8 -6.8M834.9 425.5h9.2M839.5 420.9v9.2M836.1 422.1l6.8 6.8M836.1 428.9l6.8 -6.8M837.9 421.5h9.2M842.5 416.9v9.2M839.1 418.1l6.8 6.8M839.1 424.9l6.8 -6.8M840.9 403.5h9.2M845.5 398.9v9.2M842.1 400.1l6.8 6.8M842.1 406.9l6.8 -6.8M841.9 405.5h9.2M846.5 400.9v9.2M843.1 402.1l6.8 6.8M843.1 408.9l6.8 -6.8M838.9 413.5h9.2M843.5 408.9v9.2M840.1 410.1l6.8 6.8M840.1 416.9l6.8 -6.8M841.9 409.5h9.2M846.5 404.9v9.2M843.1 406.1l6.8 6.8M843.1 412.9l6.8 -6.8M841.9 409.5h9.2M846.5 404.9v9.2M843.1 406.1l6.8 6.8M843.1 412.9l6.8 -6.8M842.9 422.5h9.2M847.5 417.9v9.2M844.1 419.1l6.8 6.8M844.1 425.9l6.8 -6.8M840.9 427.5h9.2M845.5 422.9v9.2M842.1 424.1l6.8 6.8M842.1 430.9l6.8 -6.8M838.9 428.5h9.2M843.5 423.9v9.2M840.1 425.1l6.8 6.8M840.1 431.9l6.8 -6.8M853.9 403.5h9.2M858.5 398.9v9.2M855.1 400.1l6.8 6.8M855.1 406.9l6.8 -6.8M858.9 405.5h9.2M863.5 400.9v9.2M860.1 402.1l6.8 6.8M860.1 408.9l6.8 -6.8M857.9 406.5h9.2M862.5 401.9v9.2M859.1 403.1l6.8 6.8M859.1 409.9l6.8 -6.8M855.9 409.5h9.2M860.5 404.9v9.2M857.1 406.1l6.8 6.8M857.1 412.9l6.8 -6.8M854.9 407.5h9.2M859.5 402.9v9.2M856.1 404.1l6.8 6.8M856.1 410.9l6.8 -6.8M852.9 413.5h9.2M857.5 408.9v9.2M854.1 410.1l6.8 6.8M854.1 416.9l6.8 -6.8M851.9 412.5h9.2M856.5 407.9v9.2M853.1 409.1l6.8 6.8M853.1 415.9l6.8 -6.8M849.9 417.5h9.2M854.5 412.9v9.2M851.1 414.1l6.8 6.8M851.1 420.9l6.8 -6.8M853.9 418.5h9.2M858.5 413.9v9.2M855.1 415.1l6.8 6.8M855.1 421.9l6.8 -6.8M856.9 421.5h9.2M861.5 416.9v9.2M858.1 418.1l6.8 6.8M858.1 424.9l6.8 -6.8M857.9 421.5h9.2M862.5 416.9v9.2M859.1 418.1l6.8 6.8M859.1 424.9l6.8 -6.8M852.9 424.5h9.2M857.5 419.9v9.2M854.1 421.1l6.8 6.8M854.1 427.9l6.8 -6.8M859.9 421.5h9.2M864.5 416.9v9.2M861.1 418.1l6.8 6.8M861.1 424.9l6.8 -6.8M858.9 420.5h9.2M863.5 415.9v9.2M860.1 417.1l6.8 6.8M860.1 423.9l6.8 -6.8M858.9 414.5h9.2M863.5 409.9v9.2M860.1 411.1l6.8 6.8M860.1 417.9l6.8 -6.8M857.9 414.5h9.2M862.5 409.9v9.2M859.1 411.1l6.8 6.8M859.1 417.9l6.8 -6.8M848.9 414.5h9.2M853.5 409.9v9.2M850.1 411.1l6.8 6.8M850.1 417.9l6.8 -6.8M847.9 413.5h9.2M852.5 408.9v9.2M849.1 410.1l6.8 6.8M849.1 416.9l6.8 -6.8M855.9 424.5h9.2M860.5 419.9v9.2M857.1 421.1l6.8 6.8M857.1 427.9l6.8 -6.8" stroke="#ffff00" stroke-width="1.25" fill="none"/></g><rect x="709.5" y="272.5" width="181" height="181" fill="none" stroke="#afafaf" stroke-width="1"/><text x="734.4" y="472" font-size="12.3" fill="#afafaf" text-anchor="middle">-1</text><text x="766.9" y="472" font-size="12.3" fill="#afafaf" text-anchor="middle">-0.5</text><text x="799.4" y="472" font-size="12.3" fill="#afafaf" text-anchor="middle">0</text><text x="831.9" y="472" font-size="12.3" fill="#afafaf" text-anchor="middle">0.5</text><text x="864.4" y="472" font-size="12.3" fill="#afafaf" text-anchor="middle">1</text><text x="703.3" y="303.3" font-size="12.3" fill="#afafaf" text-anchor="end">1</text><text x="703.3" y="336.0" font-size="12.3" fill="#afafaf" text-anchor="end">0.5</text><text x="703.3" y="368.7" font-size="12.3" fill="#afafaf" text-anchor="end">0</text><text x="703.3" y="401.4" font-size="12.3" fill="#afafaf" text-anchor="end">-0.5</text><text x="703.3" y="434.3" font-size="12.3" fill="#afafaf" text-anchor="end">-1</text><text x="800.0" y="493" font-size="15" fill="#afafaf" textLength="128.7" lengthAdjust="spacingAndGlyphs" text-anchor="middle">In-phase Amplitude</text><text transform="translate(670.8,362.0) rotate(-90)" font-size="15" fill="#afafaf" text-anchor="middle" textLength="145.7" lengthAdjust="spacingAndGlyphs">Quadrature Amplitude</text><text x="800.0" y="265" font-size="15" fill="#afafaf" textLength="164" lengthAdjust="spacingAndGlyphs" font-weight="bold" text-anchor="middle">Received Constellation</text><rect x="450" y="465" width="146" height="146" fill="#000"/><rect x="481" y="465" width="1" height="146" fill="#212121"/><rect x="523" y="465" width="1" height="146" fill="#212121"/><rect x="564" y="465" width="1" height="146" fill="#212121"/><rect x="450" y="496" width="146" height="1" fill="#212121"/><rect x="450" y="538" width="146" height="1" fill="#212121"/><rect x="450" y="579" width="146" height="1" fill="#212121"/><clipPath id="c4"><rect x="450" y="465" width="147.5" height="146"/></clipPath><g clip-path="url(#c4)"><path d="M525.4 535.2L569.6 491.6" stroke="#f8f810" stroke-width="2.8" stroke-linecap="round" opacity="0.8"/><path d="M525.4 535.2L556 505" stroke="#f8f810" stroke-width="2.8" stroke-linecap="round"/><circle cx="574.9" cy="485.7" r="1.5" fill="#f8f810" opacity="0.7"/><circle cx="578.3" cy="482.7" r="1.5" fill="#f8f810" opacity="0.33"/></g><rect x="449.5" y="464.5" width="147" height="147" fill="none" stroke="#afafaf" stroke-width="1"/><text x="481.6" y="631" font-size="12.3" fill="#afafaf" text-anchor="middle">-0.5</text><text x="523.4" y="631" font-size="12.3" fill="#afafaf" text-anchor="middle">0</text><text x="565.0" y="631" font-size="12.3" fill="#afafaf" text-anchor="middle">0.5</text><text x="443.5" y="502.3" font-size="12.3" fill="#afafaf" text-anchor="end">0.5</text><text x="443.5" y="543.6" font-size="12.3" fill="#afafaf" text-anchor="end">0</text><text x="443.5" y="585.1" font-size="12.3" fill="#afafaf" text-anchor="end">-0.5</text><text x="523.0" y="651" font-size="15" fill="#afafaf" textLength="102.6" lengthAdjust="spacingAndGlyphs" text-anchor="middle">Input Amplitude</text><text transform="translate(412.5,537.6) rotate(-90)" font-size="15" fill="#afafaf" text-anchor="middle" textLength="115.4" lengthAdjust="spacingAndGlyphs">Output Amplitude</text><text x="523.0" y="456.5" font-size="15" fill="#afafaf" textLength="125.5" lengthAdjust="spacingAndGlyphs" font-weight="bold" text-anchor="middle">Antenna 1 AM/AM</text><rect x="442" y="113" width="176" height="175" fill="#000"/><rect x="479" y="113" width="1" height="175" fill="#212121"/><rect x="529" y="113" width="1" height="175" fill="#212121"/><rect x="579" y="113" width="1" height="175" fill="#212121"/><rect x="442" y="150" width="176" height="1" fill="#212121"/><rect x="442" y="200" width="176" height="1" fill="#212121"/><rect x="442" y="250" width="176" height="1" fill="#212121"/><clipPath id="c3"><rect x="442" y="113" width="177.5" height="175"/></clipPath><g clip-path="url(#c3)"><path d="M532 200.5H585" stroke="#f8f810" stroke-width="2.8" stroke-linecap="round" opacity="0.8"/><path d="M532 200.5H566" stroke="#f8f810" stroke-width="2.8" stroke-linecap="round"/><circle cx="591.3" cy="200.5" r="1.5" fill="#f8f810" opacity="0.6"/><circle cx="595.5" cy="200.5" r="1.5" fill="#f8f810" opacity="0.3"/></g><rect x="441.5" y="112.5" width="177" height="176" fill="none" stroke="#afafaf" stroke-width="1"/><text x="479.5" y="307.6" font-size="12.3" fill="#afafaf" text-anchor="middle">-0.5</text><text x="529.6" y="307.6" font-size="12.3" fill="#afafaf" text-anchor="middle">0</text><text x="579.6" y="307.6" font-size="12.3" fill="#afafaf" text-anchor="middle">0.5</text><text x="435" y="156.2" font-size="12.3" fill="#afafaf" text-anchor="end">0.5</text><text x="435" y="206.1" font-size="12.3" fill="#afafaf" text-anchor="end">0</text><text x="435" y="256.0" font-size="12.3" fill="#afafaf" text-anchor="end">-0.5</text><text x="530.0" y="328.5" font-size="15" fill="#afafaf" textLength="102.6" lengthAdjust="spacingAndGlyphs" text-anchor="middle">Input Amplitude</text><text transform="translate(405.3,200.5) rotate(-90)" font-size="15" fill="#afafaf" text-anchor="middle" textLength="115" lengthAdjust="spacingAndGlyphs">Phase Difference</text><text x="530.0" y="105" font-size="15" fill="#afafaf" textLength="126" lengthAdjust="spacingAndGlyphs" font-weight="bold" text-anchor="middle">Antenna 1 AM/PM</text></svg></div></body></html>
